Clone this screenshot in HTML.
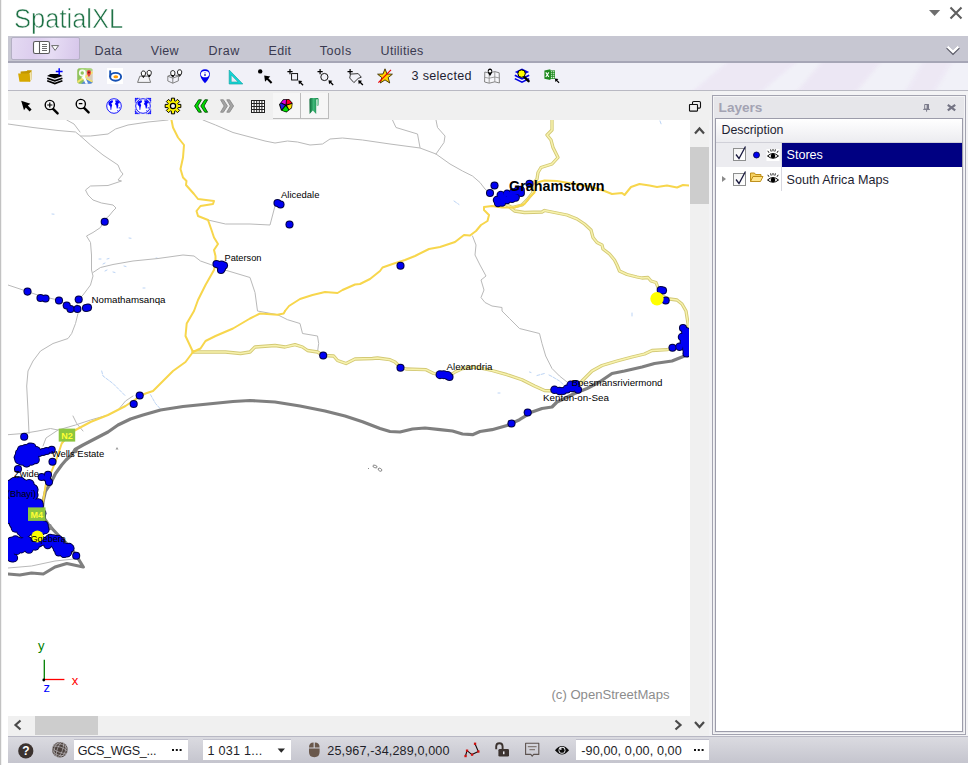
<!DOCTYPE html>
<html><head><meta charset="utf-8"><title>SpatialXL</title>
<style>
html,body{margin:0;padding:0;}
body{width:970px;height:765px;overflow:hidden;background:#fff;position:relative;font-family:"Liberation Sans",sans-serif;font-size:12.5px;color:#1e1e32;}
.abs{position:absolute;}
svg text{font-family:"Liberation Sans",sans-serif;}
#edge{left:0;top:0;width:1px;height:765px;background:#c2c2c2;border-right:1px solid #f2f2f2;}
#title{left:14.2px;top:2px;font-size:27.5px;color:#1f7246;letter-spacing:0;line-height:34px;-webkit-text-stroke:0.6px #fff;white-space:nowrap;transform:scaleX(0.928);transform-origin:0 0;}
#menubar{left:8px;top:36px;width:960px;height:25px;background:#c7c7d2;border-bottom:2px solid #a6a6b6;}
#mbtn{left:11px;top:37px;width:67px;height:21px;border:1px solid #b4b0c4;border-radius:2px;background:linear-gradient(100deg,#e4daf2 0%,#dccdee 35%,#e6dcf4 60%,#d6c6ea 100%);}
.mi{top:43.6px;font-size:12.5px;color:#3a3a50;line-height:14px;white-space:nowrap;}
#tb1{left:8px;top:63px;width:960px;height:27px;background:#f1f1f8;border-bottom:1px solid #b9b9c3;overflow:hidden;}
#tb2{left:8px;top:91px;width:705px;height:29px;background:#f0f0f0;}
#rightbg{left:709px;top:91px;width:259px;height:645px;background:#f3f3f5;}
.ic{position:absolute;overflow:visible;}
#vs{left:690px;top:120px;width:19px;height:616px;background:#f0f0f0;}
#vthumb{left:690px;top:147px;width:19px;height:57px;background:#cdcdcd;}
#hs{left:8px;top:716px;width:682px;height:20px;background:#f0f0f0;}
#hthumb{left:35px;top:716px;width:63px;height:19px;background:#cdcdcd;}
#lp{left:712px;top:95px;width:252px;height:638px;border:1px solid #a3a3b0;background:#e6e6ea;box-shadow:inset 0 0 0 1px #f4f4f6;}
#lpin{left:715px;top:118px;width:246px;height:612px;border:1px solid #9c9caa;background:#fff;}
#lptitle{left:718.6px;top:100px;font-size:13.6px;font-weight:bold;color:#a3a3b3;line-height:15px;}
#lphead{left:716px;top:119px;width:246px;height:23px;background:linear-gradient(#ffffff,#ececf0);border-bottom:1px solid #d0d0d8;}
#lphead span{position:absolute;left:5.5px;top:4px;font-size:12.4px;color:#1e1e32;line-height:14px;}
#row1l{left:716px;top:143px;width:66px;height:24px;background:#ececf0;}
#row1{left:782px;top:143px;width:180px;height:24px;background:#000082;}
.rowt{font-size:12.6px;line-height:14px;white-space:nowrap;}
.cb{width:11px;height:11px;border:1px solid #8e8f8f;background:linear-gradient(135deg,#f4f4f4,#fff);}
#status{left:8px;top:736px;width:960px;height:26.6px;background:linear-gradient(#b8b8c4 0,#b8b8c4 1px,#dadae0 1.5px,#c5c5ce 100%);}
.tbx{background:#fff;height:21px;top:739px;box-shadow:inset 0 1px 0 #c0c0cc;}
.st{top:744px;font-size:12.6px;line-height:14px;color:#1e1e28;white-space:nowrap;}
</style></head>
<body>
<div class="abs" id="edge"></div>
<div class="abs" id="title">SpatialXL</div>
<svg class="abs" style="left:926px;top:4px" width="40" height="18" viewBox="0 0 40 18"><path d="M3 6 L14.2 6 L8.6 12 Z" fill="#6e6e6e"/><path d="M24.5 3.5 L35.5 14.5 M35.5 3.5 L24.5 14.5" stroke="#5e5e5e" stroke-width="2.1" fill="none"/></svg>
<div class="abs" id="menubar"></div>
<div class="abs" id="mbtn"></div>
<svg class="abs" style="left:30px;top:40px" width="32" height="16" viewBox="0 0 32 16"><rect x="3.5" y="1.5" width="16" height="12" rx="1.8" fill="#fff" stroke="#5a5a5a" stroke-width="1.1"/><line x1="9.5" y1="1.5" x2="9.5" y2="13.5" stroke="#5a5a5a" stroke-width="1.1"/><path d="M12 4.5h5M12 6.5h5M12 8.5h5M12 10.5h5" stroke="#5a5a5a" stroke-width=".9"/><path d="M21.6 5.6 L28.6 5.6 L25.1 10.4 Z" fill="#fff" stroke="#6a6a6a" stroke-width="1"/></svg>
<div class="abs mi" style="left:94.6px;letter-spacing:.3px">Data</div>
<div class="abs mi" style="left:150.8px;letter-spacing:.3px">View</div>
<div class="abs mi" style="left:208.6px;letter-spacing:.5px">Draw</div>
<div class="abs mi" style="left:268.6px;letter-spacing:.3px">Edit</div>
<div class="abs mi" style="left:319.8px;letter-spacing:.55px">Tools</div>
<div class="abs mi" style="left:380.6px;letter-spacing:.3px">Utilities</div>
<svg class="abs" style="left:945px;top:44px" width="16" height="12" viewBox="0 0 16 12"><path d="M2.4 3.2 L8 8.9 L13.6 3.2" stroke="#5c5c68" stroke-width="3.4" fill="none" stroke-linejoin="miter"/><path d="M2.6 2.6 L8 7.9 L13.4 2.6" stroke="#fff" stroke-width="2.4" fill="none"/></svg>
<div class="abs" id="tb1">
<div class="abs" style="left:700px;top:-30px;width:70px;height:90px;background:#ebe3f3;transform:skewX(-50deg);opacity:.6;filter:blur(2px)"></div>
<div class="abs" style="left:800px;top:-30px;width:60px;height:90px;background:#eae1f2;transform:skewX(-40deg);opacity:.6;filter:blur(2px)"></div>
<div class="abs" style="left:905px;top:-30px;width:30px;height:90px;background:#ebe3f3;transform:skewX(-30deg);opacity:.6;filter:blur(2px)"></div>
</div>
<div class="abs" id="rightbg"></div>
<div class="abs" id="tb2"></div>
<svg class="ic" style="left:17.0px;top:68.0px" width="16" height="16" viewBox="0 0 16 16"><path d="M3.6 5.6 L3.6 3.5 L9.8 3.1 L10.4 2.2 L14.7 2.2 L14.3 11.7 L13 13.7 Z" fill="#c29600"/><path d="M12.4 5.6 L14.6 3 L14.2 11.4 L13.1 13.6 Z" fill="#f1e4ae"/><path d="M1.1 5.5 L12.4 5.5 L13.1 13.8 L2.5 13.8 Z" fill="#d6a800"/></svg>
<svg class="ic" style="left:47.4px;top:68.0px" width="16" height="16" viewBox="0 0 16 16"><path d="M0.1 7.9 L3.4 5.9 L12.2 5.9 L15.5 7.9 L7.8 10.6 Z" fill="#000"/><path d="M0.2 10.2 L7.8 12.9 L15.4 10.2" fill="none" stroke="#000" stroke-width="1.7"/><path d="M0.2 12.8 L7.8 15.5 L15.4 12.8" fill="none" stroke="#000" stroke-width="1.7"/><path d="M12.2 0.2 V7 M8.8 3.6 H15.6" stroke="#0000ff" stroke-width="1.5"/></svg>
<svg class="ic" style="left:76.6px;top:68.0px" width="16" height="16" viewBox="0 0 16 16"><defs><clipPath id="gm"><rect x="0.3" y="0.3" width="15.4" height="15.4" rx="2.6"/></clipPath></defs><g clip-path="url(#gm)"><rect width="16" height="16" fill="#d8cdb8"/><path d="M0 0 H9.5 L6 16 H0 Z" fill="#8fc45c"/><path d="M0 0 H16 V2.5 L9 4 Z" fill="#a8d67c"/><path d="M4 16 L10 10.5 L16 13.5 V16 Z" fill="#4f86d9"/><path d="M0 14.5 L9.5 8 L16 4" stroke="#f6e36a" stroke-width="2" fill="none"/><path d="M6.2 8 L10 16" stroke="#fff" stroke-width="2.4" fill="none"/><path d="M9.5 10.5 L16 14" stroke="#f6e36a" stroke-width="1.6" fill="none"/><circle cx="5.3" cy="5" r="2.6" fill="none" stroke="#fff" stroke-width="1.7" opacity=".9"/><path d="M7.6 2.4 L7.6 7.6 Q7.4 10 4.6 9.6" stroke="#fff" stroke-width="1.5" fill="none" opacity=".9"/><path d="M11.9 9 C9 5.4 9.4 2 11.9 2 C14.4 2 14.8 5.4 11.9 9 Z" fill="#e8453c"/><circle cx="11.9" cy="4.5" r="1" fill="#7a1a14"/></g></svg>
<svg class="ic" style="left:107.0px;top:68.0px" width="16" height="16" viewBox="0 0 16 16"><rect width="16" height="16" fill="#fff"/><path d="M3.2 2.4 V9.2" stroke="#1550b4" stroke-width="1.9" fill="none"/><ellipse cx="8.6" cy="8.8" rx="5.5" ry="3.9" fill="none" stroke="#1550b4" stroke-width="1.9"/><ellipse cx="8.8" cy="8.8" rx="2.4" ry="1.5" fill="#ff9a00"/></svg>
<svg class="ic" style="left:137.0px;top:68.0px" width="16" height="16" viewBox="0 0 16 16"><path d="M2.8 8.2 H11.6 L13.6 14.4 H0.6 Z" fill="#f4f4f8" stroke="#777" stroke-width="1"/><g transform="translate(6.4,9.6)"><path d="M0 0 C-3 -3.2 -2.6 -6.6 0 -6.6 C2.6 -6.6 3 -3.2 0 0 Z" fill="#fff" stroke="#000" stroke-width=".9"/><path d="M-1.4 -2.2 L1.4 -2.2 L0 -0.3 Z" fill="#000"/></g><g transform="translate(12.2,9)"><path d="M0 0 C-3 -3.2 -2.6 -6.6 0 -6.6 C2.6 -6.6 3 -3.2 0 0 Z" fill="#fff" stroke="#000" stroke-width=".9"/><path d="M-1.4 -2.2 L1.4 -2.2 L0 -0.3 Z" fill="#000"/></g></svg>
<svg class="ic" style="left:167.0px;top:68.0px" width="16" height="16" viewBox="0 0 16 16"><path d="M0.8 8.2 L5.6 6.2 L11.4 8 L11.4 12.8 L5.8 15.2 L0.8 13 Z M0.8 8.2 L5.8 10.2 L11.4 8 M5.8 10.2 V15.2" fill="none" stroke="#777" stroke-width=".9"/><g transform="translate(5.8,9.2)"><path d="M0 0 C-3 -3.2 -2.6 -6.6 0 -6.6 C2.6 -6.6 3 -3.2 0 0 Z" fill="#fff" stroke="#000" stroke-width=".9"/><path d="M-1.4 -2.2 L1.4 -2.2 L0 -0.3 Z" fill="#000"/></g><g transform="translate(12.6,8.4)"><path d="M0 0 C-3 -3.2 -2.6 -6.6 0 -6.6 C2.6 -6.6 3 -3.2 0 0 Z" fill="#fff" stroke="#000" stroke-width=".9"/><path d="M-1.4 -2.2 L1.4 -2.2 L0 -0.3 Z" fill="#000"/></g></svg>
<svg class="ic" style="left:197.0px;top:68.0px" width="16" height="16" viewBox="0 0 16 16"><path d="M8 15.2 C1.2 8.6 1.8 1.2 8 1.2 C14.2 1.2 14.8 8.6 8 15.2 Z" fill="#0000f0"/><ellipse cx="8" cy="6.2" rx="4.1" ry="3.1" fill="#fff"/><path d="M8 4.4 V5.2 M8 6 V8" stroke="#0000c0" stroke-width="1.2"/></svg>
<svg class="ic" style="left:227.5px;top:68.5px" width="16" height="16" viewBox="0 0 16 16"><path d="M1.2 1 V15 H14.8 Z" fill="#12d6d6" stroke="#18a4a4" stroke-width=".7"/><path d="M3.2 5.9 V13 H10.1 Z" fill="#ececf4" stroke="#18a4a4" stroke-width=".6"/></svg>
<svg class="ic" style="left:257.0px;top:68.0px" width="16" height="16" viewBox="0 0 16 16"><circle cx="3.2" cy="3.4" r="2.2" fill="#000"/><g transform="translate(7.2,7.6) scale(1.45)"><path d="M0 0 L4.2 0.6 L2.9 1.9 L5.6 4.6 L4.6 5.6 L1.9 2.9 L0.6 4.2 Z" fill="#000"/></g></svg>
<svg class="ic" style="left:288.0px;top:68.5px" width="16" height="16" viewBox="0 0 16 16"><path d="M2 0 V5.2 M-0.6 2.6 H4.6" stroke="#000" stroke-width="1.2"/><rect x="3.6" y="4.6" width="6" height="6.4" fill="none" stroke="#000" stroke-width=".9"/><g transform="translate(10.4,11.5) scale(0.92)"><path d="M0 0 L4.2 0.6 L2.9 1.9 L5.6 4.6 L4.6 5.6 L1.9 2.9 L0.6 4.2 Z" fill="#000"/></g></svg>
<svg class="ic" style="left:318.0px;top:68.5px" width="16" height="16" viewBox="0 0 16 16"><path d="M2.1 0 V5.2 M-0.5 2.6 H4.7" stroke="#000" stroke-width="1.2"/><circle cx="6.4" cy="8" r="3.6" fill="none" stroke="#000" stroke-width=".9"/><g transform="translate(10.5,11.3) scale(0.92)"><path d="M0 0 L4.2 0.6 L2.9 1.9 L5.6 4.6 L4.6 5.6 L1.9 2.9 L0.6 4.2 Z" fill="#000"/></g></svg>
<svg class="ic" style="left:348.0px;top:68.5px" width="16" height="16" viewBox="0 0 16 16"><path d="M2.1 0 V5.2 M-0.5 2.6 H4.7" stroke="#000" stroke-width="1.2"/><path d="M2.5 5.1 L10.2 4.6 L13.3 8.2 L10.2 9.4 L5.9 13.6 L1.7 9 Z" fill="none" stroke="#222" stroke-width=".9"/><g transform="translate(10.2,11.3) scale(0.92)"><path d="M0 0 L4.2 0.6 L2.9 1.9 L5.6 4.6 L4.6 5.6 L1.9 2.9 L0.6 4.2 Z" fill="#000"/></g></svg>
<svg class="ic" style="left:377.0px;top:68.0px" width="16" height="16" viewBox="0 0 16 16"><path d="M8 0.8 L10 6 L15.4 6.2 L11.2 9.6 L12.7 15 L8 11.9 L3.3 15 L4.8 9.6 L0.6 6.2 L6 6 Z" fill="#ffd400" stroke="#3a2c00" stroke-width=".9" stroke-linejoin="round"/><path d="M1.4 14.6 L14 1.8" stroke="#ee0000" stroke-width="1.2"/></svg>
<svg class="ic" style="left:484.0px;top:68.0px" width="16" height="16" viewBox="0 0 16 16"><path d="M0.8 4 L5 5 L10.8 3.6 L15.2 4.8 L15.4 15 L10.8 13.8 L5.2 15.2 L0.6 14 Z" fill="#f6f6fa" stroke="#777" stroke-width=".9"/><path d="M5.2 5 V15 M10.8 3.8 V13.8 M0.8 9.4 L5.2 10.2 L10.8 9 L15.4 10" fill="none" stroke="#888" stroke-width=".8"/><path d="M6 8 C2.8 4.4 3.2 0.6 6 0.6 C8.8 0.6 9.2 4.4 6 8 Z" fill="#000"/><circle cx="6" cy="3.2" r="1.3" fill="#fff"/></svg>
<svg class="ic" style="left:513.6px;top:67.8px" width="16" height="16" viewBox="0 0 16 16"><path d="M8 0.4 L15.2 4 L8 7.6 L0.8 4 Z" fill="#0000e0"/><path d="M0.8 7.2 L8 10.8 L15.2 7.2" fill="none" stroke="#0000e0" stroke-width="1.6"/><path d="M0.8 10.6 L8 14.2 L15.2 10.6" fill="none" stroke="#0000e0" stroke-width="1.6"/><path d="M10.4 9.2 L14.6 13.2" stroke="#000" stroke-width="2.4" stroke-linecap="round"/><circle cx="7.6" cy="5.6" r="3.7" fill="#ffff00" stroke="#000" stroke-width="1"/></svg>
<svg class="ic" style="left:544.3px;top:68.0px" width="16" height="16" viewBox="0 0 16 16"><path d="M0.4 2.4 L6.4 1.2 V12 L0.4 10.8 Z" fill="#1e8a1e"/><rect x="6" y="2.4" width="5" height="8.6" fill="#1e8a1e"/><path d="M6.9 3.8 h1.4 M9 3.8 h1.4 M6.9 5.8 h1.4 M9 5.8 h1.4 M6.9 7.8 h1.4 M9 7.8 h1.4 M6.9 9.6 h1.4 M9 9.6 h1.4" stroke="#d8f0d8" stroke-width="1.1"/><path d="M1.8 4.4 L4.8 9 M4.8 4.4 L1.8 9" stroke="#fff" stroke-width="1.1"/><g transform="translate(10.9,10.6) scale(0.82)"><path d="M0 0 L4.2 0.6 L2.9 1.9 L5.6 4.6 L4.6 5.6 L1.9 2.9 L0.6 4.2 Z" fill="#000"/></g></svg>
<div class="abs" style="left:411.6px;top:69px;font-size:12.6px;letter-spacing:.27px;line-height:14px;color:#1e1e32;white-space:nowrap">3 selected</div>
<svg class="ic" style="left:18.0px;top:98.0px" width="16" height="16" viewBox="0 0 16 16"><path d="M3.2 2.8 L12.4 5.8 L9.8 7.6 L13.6 11.4 L11.6 13.4 L7.8 9.6 L6 12.2 Z" fill="#000"/></svg>
<svg class="ic" style="left:43.6px;top:99.4px" width="16" height="16" viewBox="0 0 16 16"><path d="M8.6 9.4 L13.6 14.4" stroke="#000" stroke-width="2.4" stroke-linecap="round"/><circle cx="5.8" cy="6" r="4.6" fill="#f6f6f6" stroke="#000" stroke-width="1.4"/><path d="M3.2 6 H8.4 M5.8 3.4 V8.6" stroke="#000" stroke-width="1.2"/></svg>
<svg class="ic" style="left:74.6px;top:98.2px" width="16" height="16" viewBox="0 0 16 16"><path d="M8.6 9.4 L13.6 14.4" stroke="#000" stroke-width="2.4" stroke-linecap="round"/><circle cx="5.8" cy="6" r="4.6" fill="#f6f6f6" stroke="#000" stroke-width="1.4"/><path d="M3.8 5.6 H7.4" stroke="#000" stroke-width="1.3"/></svg>
<svg class="ic" style="left:106.1px;top:97.9px" width="16" height="16" viewBox="0 0 16 16"><circle cx="8" cy="8" r="7.3" fill="#fafaff" stroke="#1a1aff" stroke-width="1"/><path d="M3.2 3.6 L5.8 2.2 L7.2 2.8 L6.6 4.6 L5.2 5.4 L6.2 7 L5.6 9.2 L5.2 12 L4.6 12 L4.2 8.6 L2.6 6.4 L2.4 4.6 Z" fill="#0000ff"/><path d="M9 2.6 L11.8 2.2 L13.8 4.2 L13.4 5.6 L12 5.4 L12.4 7.4 L11.6 10.4 L10.8 10.4 L10.2 7.2 L8.8 6 L9.8 4.6 Z" fill="#0000ff"/><path d="M12.6 9.6 l1 -.6 l.2 1.2 l-.9 .6 z M11.2 12.4 l1 -.3 l.1 .9 l-.9 .3z" fill="#0000ff"/></svg>
<svg class="ic" style="left:135.0px;top:97.9px" width="16" height="16" viewBox="0 0 16 16"><circle cx="8" cy="8" r="7.3" fill="#fafaff" stroke="#1a1aff" stroke-width="1"/><path d="M3.2 3.6 L5.8 2.2 L7.2 2.8 L6.6 4.6 L5.2 5.4 L6.2 7 L5.6 9.2 L5.2 12 L4.6 12 L4.2 8.6 L2.6 6.4 L2.4 4.6 Z" fill="#0000ff"/><path d="M9 2.6 L11.8 2.2 L13.8 4.2 L13.4 5.6 L12 5.4 L12.4 7.4 L11.6 10.4 L10.8 10.4 L10.2 7.2 L8.8 6 L9.8 4.6 Z" fill="#0000ff"/><path d="M12.6 9.6 l1 -.6 l.2 1.2 l-.9 .6 z M11.2 12.4 l1 -.3 l.1 .9 l-.9 .3z" fill="#0000ff"/><path d="M0 0 H4 L0 4 Z M16 0 V4 L12 0 Z M16 16 H12 L16 12 Z M0 16 V12 L4 16 Z" fill="#2a2aff" opacity=".85"/><path d="M0.3 4.6 V0.3 H4.6 M11.4 0.3 H15.7 V4.6 M15.7 11.4 V15.7 H11.4 M4.6 15.7 H0.3 V11.4" fill="none" stroke="#0000ff" stroke-width=".9" stroke-dasharray="1.2 .7"/></svg>
<svg class="ic" style="left:165.0px;top:97.9px" width="16" height="16" viewBox="0 0 16 16"><path d="M15.84 6.41 L15.84 9.59 L13.16 9.60 L12.78 10.52 L14.67 12.42 L12.42 14.67 L10.52 12.78 L9.60 13.16 L9.59 15.84 L6.41 15.84 L6.40 13.16 L5.48 12.78 L3.58 14.67 L1.33 12.42 L3.22 10.52 L2.84 9.60 L0.16 9.59 L0.16 6.41 L2.84 6.40 L3.22 5.48 L1.33 3.58 L3.58 1.33 L5.48 3.22 L6.40 2.84 L6.41 0.16 L9.59 0.16 L9.60 2.84 L10.52 3.22 L12.42 1.33 L14.67 3.58 L12.78 5.48 L13.16 6.40 Z" fill="#f8f000" stroke="#000" stroke-width="1" stroke-linejoin="round"/><circle cx="8" cy="8" r="2.6" fill="#f4f4f4" stroke="#000" stroke-width="1.2"/></svg>
<svg class="ic" style="left:194.2px;top:98.6px" width="16" height="14" viewBox="0 0 16 14"><path d="M4.6 0.8 L7.4 0.8 L3.8 7 L7.4 13.2 L4.6 13.2 L0.6 7 Z" fill="#00e000" stroke="#064806" stroke-width=".9" stroke-linejoin="round"/><path d="M10.8 0.8 L13.600000000000001 0.8 L10.0 7 L13.600000000000001 13.2 L10.8 13.2 L6.8 7 Z" fill="#00e000" stroke="#064806" stroke-width=".9" stroke-linejoin="round"/></svg>
<svg class="ic" style="left:220.4px;top:98.6px" width="16" height="14" viewBox="0 0 16 14"><path d="M0.6 0.8 L3.4 0.8 L7.4 7 L3.4 13.2 L0.6 13.2 L4.2 7 Z" fill="#a4a4a4" stroke="#8a8a8a" stroke-width=".9" stroke-linejoin="round"/><path d="M6.8 0.8 L9.6 0.8 L13.600000000000001 7 L9.6 13.2 L6.8 13.2 L10.4 7 Z" fill="#a4a4a4" stroke="#8a8a8a" stroke-width=".9" stroke-linejoin="round"/></svg>
<svg class="ic" style="left:250.60000000000002px;top:100.1px" width="14" height="13" viewBox="0 0 14 13"><rect x="0.5" y="0.5" width="13" height="12" fill="#fff" stroke="#222" stroke-width="1"/><line x1="3.1" y1="0.5" x2="3.1" y2="12.5" stroke="#222" stroke-width="1"/><line x1="5.7" y1="0.5" x2="5.7" y2="12.5" stroke="#222" stroke-width="1"/><line x1="8.3" y1="0.5" x2="8.3" y2="12.5" stroke="#222" stroke-width="1"/><line x1="10.9" y1="0.5" x2="10.9" y2="12.5" stroke="#222" stroke-width="1"/><line x1="0.5" y1="3.5" x2="13.5" y2="3.5" stroke="#222" stroke-width="1"/><line x1="0.5" y1="6.5" x2="13.5" y2="6.5" stroke="#222" stroke-width="1"/><line x1="0.5" y1="9.5" x2="13.5" y2="9.5" stroke="#222" stroke-width="1"/></svg><div class="abs" style="left:273px;top:93px;width:27px;height:25px;background:#f6f6f6;border-right:1px solid #bcbcbc;border-bottom:1px solid #bcbcbc;"></div><div class="abs" style="left:301px;top:93px;width:27px;height:25px;background:#f6f6f6;border-right:1px solid #bcbcbc;border-bottom:1px solid #bcbcbc;"></div><svg class="ic" style="left:278.2px;top:98.0px" width="16" height="16" viewBox="0 0 16 16"><path d="M5.2 1.2 L11 1 L14.6 5 L14 10 L8.4 14.6 L3 12.6 L1 6.6 Z" fill="#000"/><path d="M5.6 2 L8 1.8 L7.6 6.6 L3.2 4.6 Z" fill="#e000e0"/><path d="M8.8 1.8 L11 1.8 L13.8 5 L8.6 6.6 Z" fill="#ff0020"/><path d="M2 6 L2.8 5.2 L7 7.4 L3.6 11.6 Z" fill="#2020e0"/><path d="M9 7.6 L13.8 6 L13.4 9.6 L11.2 11.4 Z" fill="#ffe000"/><path d="M7.8 8 L10.6 12 L8.2 13.8 L4.2 12.2 Z" fill="#00e000"/></svg><svg class="ic" style="left:305.5px;top:97.5px" width="16" height="17" viewBox="0 0 16 17"><defs><linearGradient id="bk" x1="0" x2="1"><stop offset="0" stop-color="#0a6a36"/><stop offset=".45" stop-color="#3fb878"/><stop offset="1" stop-color="#0e7a40"/></linearGradient></defs><path d="M3.4 1.2 Q3.6 0 5.4 0 H11.6 Q12.8 0.2 12.6 1.8 L12.4 7.6 L10.8 7.4 L11 1.6 L10.2 1.4 L10.2 16 L6.8 12.6 L3.6 16 Z" fill="url(#bk)"/><path d="M10.6 1.4 Q11.8 0.6 12.4 1.8 L12.2 7.6 L10.8 7.4 Z" fill="#8fd8ae"/></svg><svg class="abs" style="left:688px;top:100px" width="14" height="13" viewBox="0 0 14 13"><rect x="4.5" y="1.5" width="8" height="6.6" rx="1.2" fill="none" stroke="#111" stroke-width="1.1"/><rect x="1.5" y="4.5" width="8" height="6.6" rx=".5" fill="#f0f0f0" stroke="#111" stroke-width="1.1"/></svg>
<svg id="map" width="681" height="596" viewBox="0 0 681 596" style="position:absolute;left:8px;top:120px;background:#fff">
<polyline points="93.7,251.0 95.0,256.0 105.0,263.5 112.5,271.0 117.5,276.0" fill="none" stroke="#bcd4f5" stroke-width="1" stroke-linejoin="round" stroke-linecap="round" stroke-dasharray="3 1.5"/>
<polyline points="142.5,274.7 147.5,283.5 152.5,289.0" fill="none" stroke="#bcd4f5" stroke-width="1" stroke-linejoin="round" stroke-linecap="round" stroke-dasharray="3 1.5"/>
<polyline points="521.5,252.0 523.0,252.5" fill="none" stroke="#bcd4f5" stroke-width="1" stroke-linejoin="round" stroke-linecap="round" stroke-dasharray="3 1.5"/>
<polyline points="529.0,255.5 536.5,253.5" fill="none" stroke="#bcd4f5" stroke-width="1" stroke-linejoin="round" stroke-linecap="round" stroke-dasharray="3 1.5"/>
<polyline points="541.0,255.0 544.0,256.5 551.5,261.0 557.0,266.0" fill="none" stroke="#bcd4f5" stroke-width="1" stroke-linejoin="round" stroke-linecap="round" stroke-dasharray="3 1.5"/>
<polyline points="446.0,81.0 451.0,84.5" fill="none" stroke="#bcd4f5" stroke-width="1" stroke-linejoin="round" stroke-linecap="round" stroke-dasharray="3 1.5"/>
<polyline points="652.0,1.0 653.5,5.0" fill="none" stroke="#bcd4f5" stroke-width="1" stroke-linejoin="round" stroke-linecap="round" stroke-dasharray="3 1.5"/>
<polyline points="624.0,193.0 624.0,196.0" fill="none" stroke="#bcd4f5" stroke-width="1" stroke-linejoin="round" stroke-linecap="round" stroke-dasharray="3 1.5"/>
<polyline points="490.0,273.0 492.0,273.0" fill="none" stroke="#bcd4f5" stroke-width="1" stroke-linejoin="round" stroke-linecap="round" stroke-dasharray="3 1.5"/>
<polyline points="44.0,94.0 46.0,94.2" fill="none" stroke="#bcd4f5" stroke-width="1" stroke-linejoin="round" stroke-linecap="round" stroke-dasharray="3 1.5"/>
<polyline points="91.0,139.0 93.0,139.0" fill="none" stroke="#bcd4f5" stroke-width="1" stroke-linejoin="round" stroke-linecap="round" stroke-dasharray="3 1.5"/>
<polyline points="95.0,144.0 97.0,143.0" fill="none" stroke="#bcd4f5" stroke-width="1" stroke-linejoin="round" stroke-linecap="round" stroke-dasharray="3 1.5"/>
<polyline points="99.0,139.0 101.0,138.5" fill="none" stroke="#bcd4f5" stroke-width="1" stroke-linejoin="round" stroke-linecap="round" stroke-dasharray="3 1.5"/>
<polyline points="121.0,118.0 123.0,118.3" fill="none" stroke="#bcd4f5" stroke-width="1" stroke-linejoin="round" stroke-linecap="round" stroke-dasharray="3 1.5"/>
<polyline points="97.0,151.0 99.0,150.0" fill="none" stroke="#bcd4f5" stroke-width="1" stroke-linejoin="round" stroke-linecap="round" stroke-dasharray="3 1.5"/>
<polyline points="105.0,152.0 107.0,152.5" fill="none" stroke="#bcd4f5" stroke-width="1" stroke-linejoin="round" stroke-linecap="round" stroke-dasharray="3 1.5"/>
<polyline points="116.0,146.0 118.0,146.5" fill="none" stroke="#bcd4f5" stroke-width="1" stroke-linejoin="round" stroke-linecap="round" stroke-dasharray="3 1.5"/>
<polyline points="135.0,168.0 137.0,168.0" fill="none" stroke="#bcd4f5" stroke-width="1" stroke-linejoin="round" stroke-linecap="round" stroke-dasharray="3 1.5"/>
<polyline points="148.0,138.0 149.0,138.0" fill="none" stroke="#bcd4f5" stroke-width="1" stroke-linejoin="round" stroke-linecap="round" stroke-dasharray="3 1.5"/>
<polyline points="0.0,4.0 25.0,7.5 50.0,10.5 67.5,12.0 72.5,16.0 82.5,16.0 100.0,14.0 107.5,9.0 120.0,5.0 140.0,2.0 160.0,0.0" fill="none" stroke="#b9b9b9" stroke-width="1" stroke-linejoin="round" stroke-linecap="round" />
<polyline points="58.7,0.0 66.0,4.0 72.0,12.0" fill="none" stroke="#b9b9b9" stroke-width="1" stroke-linejoin="round" stroke-linecap="round" />
<polyline points="72.5,16.0 82.5,25.0 95.0,35.0 110.0,45.0 112.5,51.0 115.0,54.0 110.0,60.0 113.5,61.0 100.0,65.5 82.5,66.0 77.5,70.0 80.0,75.0 85.0,80.0 93.5,83.0 105.0,85.0 108.0,88.0 105.0,91.0 101.0,96.0 96.0,100.0 92.5,107.5 85.0,112.5 78.5,116.0 82.5,122.5 83.5,135.0 83.5,150.0 85.0,156.0 82.5,165.0 75.0,175.0 70.0,180.0 67.5,191.0 70.0,193.5 67.5,203.5 63.7,213.5 60.0,218.5 45.0,223.5 32.5,231.0 25.0,241.0 20.0,251.0 18.7,266.0 20.0,291.0 21.0,313.5" fill="none" stroke="#b9b9b9" stroke-width="1" stroke-linejoin="round" stroke-linecap="round" />
<polyline points="85.0,152.5 92.5,147.5 105.0,144.5 125.0,141.0 150.0,138.5 175.0,135.0 186.0,136.0 192.5,141.0 202.5,144.5 217.0,150.0 242.0,157.5 247.0,172.5 249.5,191.0 269.5,194.7 279.5,199.7 292.0,203.5 294.5,213.5 309.5,216.0 310.7,223.5 309.5,232.0 315.0,235.5" fill="none" stroke="#b9b9b9" stroke-width="1" stroke-linejoin="round" stroke-linecap="round" />
<polyline points="0.0,165.0 15.0,170.0 32.5,176.0 50.0,180.0 65.0,187.5" fill="none" stroke="#b9b9b9" stroke-width="1" stroke-linejoin="round" stroke-linecap="round" />
<polyline points="200.0,100.0 217.5,104.0 242.0,104.0 262.0,105.0 267.0,86.0" fill="none" stroke="#b9b9b9" stroke-width="1" stroke-linejoin="round" stroke-linecap="round" />
<polyline points="195.0,0.0 207.5,5.0 225.0,12.5 242.0,17.0 257.0,21.0 267.0,23.0 279.5,21.0 289.5,22.0 302.0,25.0 314.5,24.0 322.0,19.0 334.5,18.0 354.5,20.0 382.0,24.0 412.0,28.0 428.0,34.0 442.0,44.0 454.5,51.0 464.5,56.0 472.0,62.5 477.0,69.0 481.0,72.5" fill="none" stroke="#b9b9b9" stroke-width="1" stroke-linejoin="round" stroke-linecap="round" />
<polyline points="384.5,0.0 388.0,7.5 409.5,14.0 412.0,27.5" fill="none" stroke="#b9b9b9" stroke-width="1" stroke-linejoin="round" stroke-linecap="round" />
<polyline points="428.0,0.0 429.5,7.5 437.0,16.0 436.0,22.5 428.0,34.0" fill="none" stroke="#b9b9b9" stroke-width="1" stroke-linejoin="round" stroke-linecap="round" />
<polyline points="464.5,116.0 468.0,125.0 467.0,135.0 472.0,145.0 478.0,156.0 473.0,160.0 476.0,170.0 473.0,177.5 477.0,182.5 484.0,186.0 494.0,187.5 494.0,191.0 501.5,198.5 511.5,208.5 531.5,213.5 534.0,223.5 537.7,236.0 544.0,248.5 551.5,256.0 559.0,262.0" fill="none" stroke="#b9b9b9" stroke-width="1" stroke-linejoin="round" stroke-linecap="round" />
<polyline points="0.0,314.7 15.0,313.5 30.0,311.0 42.5,308.5 50.0,310.0 67.5,305.0 82.5,300.0 100.0,295.0 110.0,290.0 117.5,281.0 125.0,276.0" fill="none" stroke="#b9b9b9" stroke-width="1" stroke-linejoin="round" stroke-linecap="round" />
<polyline points="65.0,296.0 68.7,303.5 75.0,311.0" fill="none" stroke="#b9b9b9" stroke-width="1" stroke-linejoin="round" stroke-linecap="round" />
<polyline points="35.0,326.0 38.0,318.0 50.0,310.0" fill="none" stroke="#b9b9b9" stroke-width="1" stroke-linejoin="round" stroke-linecap="round" />
<polyline points="0.0,448.0 23.5,446.0 47.0,441.0 66.0,439.0" fill="none" stroke="#b9b9b9" stroke-width="1" stroke-linejoin="round" stroke-linecap="round" />
<polyline points="681.5,233.5 674.0,237.0 664.0,241.0 646.5,243.5 634.0,247.0 616.5,251.0 604.0,253.5 591.5,262.0 579.0,268.5 566.5,273.5 556.5,278.5 549.0,282.0 544.0,287.0 534.0,288.5 524.0,292.0 511.5,299.7 499.0,305.5 484.0,309.7 472.0,311.5 464.5,314.7 454.5,314.0 444.5,311.0 432.0,309.7 417.0,308.0 404.5,309.0 392.0,312.0 382.0,311.5 372.0,308.5 354.5,301.7 337.0,296.0 317.0,291.0 292.0,286.0 267.0,282.0 242.0,280.5 225.0,281.5 200.0,284.0 175.0,286.5 152.5,290.0 135.0,295.0 122.5,299.0 110.0,305.0 100.0,312.0 87.5,318.5 75.0,325.0 67.0,329.5 63.5,335.0 58.0,340.0 53.7,345.0 47.5,353.5 42.5,363.5 37.5,371.0 35.0,382.0 34.0,395.0 40.0,404.0 43.5,408.0" fill="none" stroke="#7f7f7f" stroke-width="3.2" stroke-linejoin="round" stroke-linecap="round" />
<polyline points="43.5,408.0 52.0,417.0 62.0,427.0 68.0,435.0 75.3,447.0 58.8,443.5 47.0,447.0 35.3,454.0 23.5,453.0 11.8,455.0 0.0,454.0" fill="none" stroke="#7f7f7f" stroke-width="3.2" stroke-linejoin="round" stroke-linecap="round" />
<circle cx="67.5" cy="331" r="2.3" fill="#7f7f7f"/>
<path d="M46 525 l5 -1 l2 5 l-5 2 z" transform="translate(-8,-120)" fill="#8a8a8a"/>
<polyline points="544.0,0.0 544.0,10.0 539.0,15.0 543.0,20.0 545.0,27.5 550.0,37.5 544.0,44.0 533.0,47.5 530.0,52.5 529.0,59.0 524.0,65.0 525.0,72.5 519.0,80.0 514.0,85.0 504.0,87.5 499.0,85.0" fill="none" stroke="#d3c975" stroke-width="3.3" stroke-linejoin="round" stroke-linecap="round" />
<polyline points="499.0,85.0 506.5,91.0 516.5,92.5 534.0,92.0 536.5,90.5 546.5,92.5 559.0,95.0 569.0,99.0 576.5,104.0 583.0,110.0 585.0,117.5 589.0,122.5 594.0,125.0 595.0,129.0 601.5,134.0 606.5,140.0 609.0,145.0 611.5,151.0 619.0,154.5 629.0,157.0 634.0,158.0 640.0,157.5 643.0,161.0 648.0,162.5 650.0,167.5 654.0,176.0 661.5,179.0 669.0,180.0 674.0,184.0 678.0,191.0 680.0,203.5 681.0,215.0" fill="none" stroke="#d3c975" stroke-width="3.3" stroke-linejoin="round" stroke-linecap="round" />
<polyline points="185.0,232.0 200.0,232.0 217.5,232.0 232.5,233.5 242.0,232.0 247.0,227.0 267.0,225.5 277.0,227.0 287.0,224.7 294.5,227.0 299.5,230.5 309.5,232.0 315.0,235.5 325.7,236.0 329.5,240.5 338.0,243.5 347.0,239.0 364.5,238.5 369.5,238.0 382.0,239.7 387.0,242.0 392.0,247.0 398.0,249.0 418.0,249.7 425.7,253.5 432.0,254.7 442.0,255.5 447.0,252.0 454.5,248.5 467.0,247.0 484.0,250.5 499.0,254.7 514.0,259.7 526.5,266.0 536.5,270.5 546.5,271.0 559.0,268.5 569.0,266.0 576.5,258.5 584.0,251.0 594.0,245.5 609.0,241.0 624.0,237.0 636.5,234.0 644.0,230.5 659.0,229.7 664.0,228.0 674.0,226.0" fill="none" stroke="#d3c975" stroke-width="3.3" stroke-linejoin="round" stroke-linecap="round" />
<polyline points="544.0,0.0 544.0,10.0 539.0,15.0 543.0,20.0 545.0,27.5 550.0,37.5 544.0,44.0 533.0,47.5 530.0,52.5 529.0,59.0 524.0,65.0 525.0,72.5 519.0,80.0 514.0,85.0 504.0,87.5 499.0,85.0" fill="none" stroke="#f7f2ae" stroke-width="1.5" stroke-linejoin="round" stroke-linecap="round" />
<polyline points="499.0,85.0 506.5,91.0 516.5,92.5 534.0,92.0 536.5,90.5 546.5,92.5 559.0,95.0 569.0,99.0 576.5,104.0 583.0,110.0 585.0,117.5 589.0,122.5 594.0,125.0 595.0,129.0 601.5,134.0 606.5,140.0 609.0,145.0 611.5,151.0 619.0,154.5 629.0,157.0 634.0,158.0 640.0,157.5 643.0,161.0 648.0,162.5 650.0,167.5 654.0,176.0 661.5,179.0 669.0,180.0 674.0,184.0 678.0,191.0 680.0,203.5 681.0,215.0" fill="none" stroke="#f7f2ae" stroke-width="1.5" stroke-linejoin="round" stroke-linecap="round" />
<polyline points="185.0,232.0 200.0,232.0 217.5,232.0 232.5,233.5 242.0,232.0 247.0,227.0 267.0,225.5 277.0,227.0 287.0,224.7 294.5,227.0 299.5,230.5 309.5,232.0 315.0,235.5 325.7,236.0 329.5,240.5 338.0,243.5 347.0,239.0 364.5,238.5 369.5,238.0 382.0,239.7 387.0,242.0 392.0,247.0 398.0,249.0 418.0,249.7 425.7,253.5 432.0,254.7 442.0,255.5 447.0,252.0 454.5,248.5 467.0,247.0 484.0,250.5 499.0,254.7 514.0,259.7 526.5,266.0 536.5,270.5 546.5,271.0 559.0,268.5 569.0,266.0 576.5,258.5 584.0,251.0 594.0,245.5 609.0,241.0 624.0,237.0 636.5,234.0 644.0,230.5 659.0,229.7 664.0,228.0 674.0,226.0" fill="none" stroke="#f7f2ae" stroke-width="1.5" stroke-linejoin="round" stroke-linecap="round" />
<polyline points="163.5,0.0 165.0,7.5 170.0,17.5 176.0,25.0 175.0,37.5 172.5,49.0 175.0,57.5 178.5,61.0 178.0,65.0 186.0,74.0 190.0,79.0 206.0,81.0 205.0,84.0 192.5,86.0 188.5,91.0 190.0,96.0 200.0,100.0 203.5,110.0 206.0,117.5 210.0,124.0 206.0,130.0 207.5,136.0 207.5,144.0 206.0,150.0 197.5,165.0 190.0,180.0 186.0,191.0 178.7,203.5 177.5,216.0 185.0,232.0" fill="none" stroke="#f7d64c" stroke-width="2" stroke-linejoin="round" stroke-linecap="round" />
<polyline points="277.0,191.0 281.0,186.0 292.0,179.0 304.5,175.0 317.0,172.0 329.5,173.0 334.5,170.0 347.0,164.5 352.0,164.0 362.0,159.0 372.0,151.0 374.5,147.5 384.5,144.0 397.0,140.0 407.0,136.0 421.0,129.0 432.0,127.0 447.0,122.0 456.0,115.0 462.0,115.5 468.0,111.0 473.0,105.0 479.5,101.0 481.0,95.0 476.0,90.0 476.0,87.0 484.0,86.0 494.0,87.5 506.5,87.5 516.5,84.0 521.5,77.5 526.5,72.5 529.0,62.5 536.5,60.5 549.0,61.0 566.5,64.0 584.0,67.0 596.5,71.0 604.0,74.0 614.0,73.0 616.5,75.0 623.0,67.0 631.5,64.0 641.5,65.5 649.0,67.0 659.0,65.5 669.0,67.5 675.0,65.0 681.5,65.5" fill="none" stroke="#f7d64c" stroke-width="2" stroke-linejoin="round" stroke-linecap="round" />
<polyline points="277.0,191.0 275.7,193.5 269.5,194.7 252.0,193.5 242.0,198.5 225.0,208.5 207.5,216.0 197.5,221.0 192.5,228.5 185.0,232.0" fill="none" stroke="#f7d64c" stroke-width="2" stroke-linejoin="round" stroke-linecap="round" />
<polyline points="185.0,232.0 177.5,242.0 165.0,251.0 155.0,261.0 145.0,271.0 137.5,273.5 132.5,276.0 117.5,286.0 100.0,295.0 82.5,302.0 67.5,310.0 59.0,317.0 53.7,323.5 48.7,338.5 43.7,351.0 37.5,366.0 35.0,382.0 34.0,400.0" fill="none" stroke="#f7d64c" stroke-width="2" stroke-linejoin="round" stroke-linecap="round" />
<ellipse cx="367" cy="346.5" rx="2.2" ry="1.2" fill="none" stroke="#444" stroke-width=".6" transform="rotate(20 367 346.5)"/>
<ellipse cx="372" cy="349.7" rx="2" ry="1.3" fill="none" stroke="#444" stroke-width=".6" transform="rotate(30 372 349.7)"/>
<circle cx="360.5" cy="348.5" r=".5" fill="#666"/>
<path d="M107.5 329.5 l3 0 l-1.5 -2.6 z" fill="#999"/>
<g fill="#000046">
<circle cx="96.7" cy="101.7" r="4.05"/>
<circle cx="19.5" cy="171.6" r="4.05"/>
<circle cx="32.5" cy="178.0" r="4.05"/>
<circle cx="37.5" cy="178.5" r="4.05"/>
<circle cx="51.0" cy="180.5" r="4.05"/>
<circle cx="58.7" cy="185.5" r="4.05"/>
<circle cx="70.7" cy="179.5" r="4.05"/>
<circle cx="62.5" cy="189.0" r="4.05"/>
<circle cx="69.4" cy="189.0" r="4.05"/>
<circle cx="80.0" cy="187.5" r="4.05"/>
<circle cx="78.0" cy="188.0" r="4.05"/>
<circle cx="269.5" cy="83.0" r="4.05"/>
<circle cx="272.5" cy="84.5" r="4.05"/>
<circle cx="281.5" cy="104.5" r="4.05"/>
<circle cx="208.5" cy="144.0" r="4.05"/>
<circle cx="211.0" cy="145.0" r="4.05"/>
<circle cx="213.5" cy="144.5" r="4.05"/>
<circle cx="216.0" cy="145.5" r="4.05"/>
<circle cx="214.0" cy="148.5" r="4.05"/>
<circle cx="213.0" cy="150.0" r="4.05"/>
<circle cx="392.5" cy="145.7" r="4.05"/>
<circle cx="486.5" cy="65.5" r="4.05"/>
<circle cx="482.0" cy="73.0" r="4.05"/>
<circle cx="521.5" cy="63.7" r="4.05"/>
<circle cx="492.7" cy="75.0" r="4.15"/>
<circle cx="499.0" cy="73.7" r="4.15"/>
<circle cx="505.0" cy="72.5" r="4.15"/>
<circle cx="509.0" cy="71.0" r="4.15"/>
<circle cx="512.7" cy="70.0" r="4.15"/>
<circle cx="489.0" cy="80.0" r="4.25"/>
<circle cx="494.0" cy="82.5" r="4.25"/>
<circle cx="499.0" cy="80.0" r="4.25"/>
<circle cx="504.0" cy="78.7" r="4.25"/>
<circle cx="507.7" cy="77.5" r="4.15"/>
<circle cx="490.0" cy="83.0" r="4.15"/>
<circle cx="495.0" cy="78.0" r="4.15"/>
<circle cx="502.0" cy="75.5" r="4.15"/>
<circle cx="513.0" cy="73.0" r="3.95"/>
<circle cx="652.7" cy="170.0" r="4.05"/>
<circle cx="655.0" cy="170.5" r="4.05"/>
<circle cx="657.7" cy="180.5" r="4.05"/>
<circle cx="315.2" cy="235.5" r="4.05"/>
<circle cx="392.5" cy="247.7" r="4.05"/>
<circle cx="432.0" cy="254.7" r="4.45"/>
<circle cx="435.7" cy="254.7" r="4.45"/>
<circle cx="439.5" cy="255.5" r="4.45"/>
<circle cx="441.5" cy="257.0" r="4.05"/>
<circle cx="519.7" cy="292.5" r="4.05"/>
<circle cx="503.5" cy="303.5" r="4.05"/>
<circle cx="546.5" cy="269.7" r="4.25"/>
<circle cx="551.5" cy="271.0" r="4.25"/>
<circle cx="555.0" cy="271.0" r="4.05"/>
<circle cx="559.0" cy="269.0" r="4.45"/>
<circle cx="562.7" cy="264.7" r="4.25"/>
<circle cx="564.0" cy="268.0" r="4.25"/>
<circle cx="566.5" cy="267.0" r="4.45"/>
<circle cx="570.0" cy="269.7" r="4.05"/>
<circle cx="568.0" cy="264.0" r="4.05"/>
<circle cx="664.5" cy="227.7" r="4.05"/>
<circle cx="671.5" cy="226.7" r="4.25"/>
<circle cx="675.0" cy="208.0" r="4.05"/>
<circle cx="674.0" cy="217.0" r="4.25"/>
<circle cx="678.5" cy="233.5" r="4.05"/>
<circle cx="678.0" cy="212.0" r="4.95"/>
<circle cx="679.0" cy="218.0" r="5.45"/>
<circle cx="678.0" cy="224.0" r="5.45"/>
<circle cx="679.0" cy="229.0" r="4.95"/>
<circle cx="676.0" cy="222.0" r="4.45"/>
<circle cx="131.7" cy="275.5" r="4.05"/>
<circle cx="125.7" cy="284.0" r="4.05"/>
<circle cx="16.2" cy="316.7" r="4.05"/>
<circle cx="38.7" cy="331.0" r="4.05"/>
<circle cx="43.7" cy="329.7" r="4.05"/>
<circle cx="35.0" cy="332.0" r="4.05"/>
<circle cx="31.0" cy="333.0" r="4.05"/>
<circle cx="44.5" cy="341.7" r="4.05"/>
<circle cx="10.0" cy="349.0" r="4.05"/>
<circle cx="40.0" cy="354.7" r="4.05"/>
<circle cx="33.7" cy="357.0" r="4.05"/>
<circle cx="41.0" cy="362.0" r="4.05"/>
<circle cx="39.0" cy="358.0" r="4.05"/>
<circle cx="68.2" cy="435.8" r="4.05"/>
<circle cx="17.5" cy="328.4" r="4.45"/>
<circle cx="24.0" cy="327.2" r="4.45"/>
<circle cx="21.7" cy="331.9" r="4.45"/>
<circle cx="12.2" cy="334.1" r="4.45"/>
<circle cx="11.7" cy="332.9" r="4.45"/>
<circle cx="19.5" cy="339.2" r="4.45"/>
<circle cx="13.5" cy="329.6" r="4.45"/>
<circle cx="23.5" cy="341.2" r="4.45"/>
<circle cx="22.5" cy="332.3" r="4.45"/>
<circle cx="28.2" cy="330.6" r="4.45"/>
<circle cx="17.2" cy="339.1" r="4.45"/>
<circle cx="14.6" cy="335.3" r="4.45"/>
<circle cx="23.8" cy="332.0" r="4.45"/>
<circle cx="22.0" cy="327.0" r="4.45"/>
<circle cx="24.6" cy="332.8" r="4.45"/>
<circle cx="17.3" cy="335.4" r="4.45"/>
<circle cx="20.1" cy="330.8" r="4.45"/>
<circle cx="26.9" cy="337.2" r="4.45"/>
<circle cx="15.9" cy="335.2" r="4.45"/>
<circle cx="21.5" cy="340.0" r="4.45"/>
<circle cx="25.6" cy="330.6" r="4.45"/>
<circle cx="19.4" cy="338.1" r="4.45"/>
<circle cx="14.0" cy="333.8" r="4.45"/>
<circle cx="11.8" cy="336.7" r="4.45"/>
<circle cx="26.3" cy="335.2" r="4.45"/>
<circle cx="28.5" cy="331.0" r="4.45"/>
<circle cx="24.9" cy="335.5" r="4.45"/>
<circle cx="22.6" cy="333.3" r="4.45"/>
<circle cx="20.5" cy="336.6" r="4.45"/>
<circle cx="12.2" cy="337.2" r="4.45"/>
<circle cx="27.4" cy="330.6" r="4.45"/>
<circle cx="18.7" cy="336.7" r="4.45"/>
<circle cx="11.5" cy="333.4" r="4.45"/>
<circle cx="13.6" cy="330.0" r="4.45"/>
<circle cx="18.8" cy="339.9" r="4.45"/>
<circle cx="12.6" cy="333.2" r="4.45"/>
<circle cx="22.0" cy="340.1" r="4.45"/>
<circle cx="27.4" cy="339.8" r="4.45"/>
<circle cx="16.6" cy="332.6" r="4.45"/>
<circle cx="18.2" cy="340.1" r="4.45"/>
<circle cx="10.1" cy="337.3" r="4.45"/>
<circle cx="10.8" cy="339.8" r="4.45"/>
<circle cx="15.1" cy="337.6" r="4.45"/>
<circle cx="12.4" cy="340.7" r="4.45"/>
<circle cx="19.4" cy="341.9" r="4.45"/>
<circle cx="14.2" cy="341.2" r="4.45"/>
<circle cx="16.1" cy="335.5" r="4.45"/>
<circle cx="18.8" cy="342.8" r="4.45"/>
<circle cx="18.5" cy="343.0" r="4.45"/>
<circle cx="12.7" cy="339.0" r="4.45"/>
<circle cx="-0.9" cy="374.8" r="5.45"/>
<circle cx="2.3" cy="364.9" r="5.45"/>
<circle cx="6.2" cy="362.6" r="5.45"/>
<circle cx="-1.0" cy="369.1" r="5.45"/>
<circle cx="14.4" cy="364.6" r="5.45"/>
<circle cx="3.6" cy="368.8" r="5.45"/>
<circle cx="6.9" cy="364.1" r="5.45"/>
<circle cx="10.0" cy="371.7" r="5.45"/>
<circle cx="6.3" cy="367.1" r="5.45"/>
<circle cx="20.9" cy="364.9" r="5.45"/>
<circle cx="11.8" cy="364.6" r="5.45"/>
<circle cx="12.3" cy="362.1" r="5.45"/>
<circle cx="11.8" cy="382.0" r="5.45"/>
<circle cx="21.9" cy="376.1" r="5.45"/>
<circle cx="3.8" cy="369.2" r="5.45"/>
<circle cx="1.0" cy="377.7" r="5.45"/>
<circle cx="12.0" cy="377.9" r="5.45"/>
<circle cx="5.9" cy="366.2" r="5.45"/>
<circle cx="21.6" cy="378.4" r="5.45"/>
<circle cx="20.5" cy="377.0" r="5.45"/>
<circle cx="2.8" cy="372.4" r="5.45"/>
<circle cx="6.7" cy="362.1" r="5.45"/>
<circle cx="3.8" cy="376.0" r="5.45"/>
<circle cx="24.7" cy="370.9" r="5.45"/>
<circle cx="24.7" cy="369.2" r="5.45"/>
<circle cx="2.6" cy="366.3" r="5.45"/>
<circle cx="1.9" cy="365.8" r="5.45"/>
<circle cx="14.7" cy="380.4" r="5.45"/>
<circle cx="21.2" cy="371.6" r="5.45"/>
<circle cx="15.6" cy="378.3" r="5.45"/>
<circle cx="-1.5" cy="375.4" r="5.45"/>
<circle cx="23.3" cy="377.9" r="5.45"/>
<circle cx="18.5" cy="371.5" r="5.45"/>
<circle cx="1.4" cy="378.1" r="5.45"/>
<circle cx="6.0" cy="378.3" r="5.45"/>
<circle cx="25.1" cy="369.8" r="5.45"/>
<circle cx="8.0" cy="381.4" r="5.45"/>
<circle cx="17.7" cy="365.1" r="5.45"/>
<circle cx="0.4" cy="378.9" r="5.45"/>
<circle cx="6.5" cy="373.0" r="5.45"/>
<circle cx="25.1" cy="375.1" r="5.45"/>
<circle cx="11.8" cy="381.1" r="5.45"/>
<circle cx="9.0" cy="379.8" r="5.45"/>
<circle cx="20.8" cy="365.9" r="5.45"/>
<circle cx="3.6" cy="367.7" r="5.45"/>
<circle cx="3.2" cy="373.8" r="5.45"/>
<circle cx="3.8" cy="370.3" r="5.45"/>
<circle cx="6.6" cy="371.1" r="5.45"/>
<circle cx="13.5" cy="380.5" r="5.45"/>
<circle cx="8.6" cy="380.8" r="5.45"/>
<circle cx="11.0" cy="372.7" r="5.45"/>
<circle cx="11.7" cy="361.9" r="5.45"/>
<circle cx="9.2" cy="365.3" r="5.45"/>
<circle cx="1.2" cy="371.4" r="5.45"/>
<circle cx="17.8" cy="373.2" r="5.45"/>
<circle cx="5.8" cy="372.4" r="5.45"/>
<circle cx="12.7" cy="378.0" r="5.45"/>
<circle cx="-0.8" cy="373.3" r="5.45"/>
<circle cx="3.5" cy="367.3" r="5.45"/>
<circle cx="19.2" cy="372.2" r="5.45"/>
<circle cx="12.9" cy="377.5" r="5.45"/>
<circle cx="23.4" cy="370.8" r="5.45"/>
<circle cx="14.4" cy="372.1" r="5.45"/>
<circle cx="11.4" cy="376.0" r="5.45"/>
<circle cx="9.6" cy="372.7" r="5.45"/>
<circle cx="10.3" cy="381.3" r="5.45"/>
<circle cx="17.0" cy="379.9" r="5.45"/>
<circle cx="12.8" cy="381.3" r="5.45"/>
<circle cx="21.2" cy="364.4" r="5.45"/>
<circle cx="-0.4" cy="370.8" r="5.45"/>
<circle cx="-1.8" cy="366.6" r="5.45"/>
<circle cx="-1.8" cy="375.6" r="5.45"/>
<circle cx="19.5" cy="380.3" r="5.45"/>
<circle cx="0.6" cy="376.5" r="5.45"/>
<circle cx="15.8" cy="364.5" r="5.45"/>
<circle cx="7.9" cy="371.7" r="5.45"/>
<circle cx="0.8" cy="370.6" r="5.45"/>
<circle cx="11.5" cy="368.6" r="5.45"/>
<circle cx="1.9" cy="368.2" r="5.45"/>
<circle cx="12.6" cy="370.7" r="5.45"/>
<circle cx="14.7" cy="372.3" r="5.45"/>
<circle cx="-0.9" cy="367.1" r="5.45"/>
<circle cx="4.1" cy="364.2" r="5.45"/>
<circle cx="8.7" cy="380.6" r="5.45"/>
<circle cx="20.6" cy="366.9" r="5.45"/>
<circle cx="13.1" cy="376.2" r="5.45"/>
<circle cx="16.6" cy="370.4" r="5.45"/>
<circle cx="15.0" cy="378.3" r="5.45"/>
<circle cx="9.6" cy="368.6" r="5.45"/>
<circle cx="12.6" cy="381.0" r="5.45"/>
<circle cx="7.6" cy="381.6" r="5.45"/>
<circle cx="17.0" cy="384.7" r="5.45"/>
<circle cx="9.2" cy="386.5" r="5.45"/>
<circle cx="25.3" cy="386.1" r="5.45"/>
<circle cx="16.0" cy="383.0" r="5.45"/>
<circle cx="24.4" cy="393.4" r="5.45"/>
<circle cx="4.8" cy="391.3" r="5.45"/>
<circle cx="27.5" cy="390.1" r="5.45"/>
<circle cx="15.8" cy="401.4" r="5.45"/>
<circle cx="12.2" cy="392.2" r="5.45"/>
<circle cx="10.3" cy="401.3" r="5.45"/>
<circle cx="23.4" cy="395.8" r="5.45"/>
<circle cx="12.6" cy="387.7" r="5.45"/>
<circle cx="0.5" cy="398.7" r="5.45"/>
<circle cx="7.2" cy="382.6" r="5.45"/>
<circle cx="29.3" cy="396.8" r="5.45"/>
<circle cx="8.1" cy="384.8" r="5.45"/>
<circle cx="8.6" cy="390.9" r="5.45"/>
<circle cx="3.7" cy="390.5" r="5.45"/>
<circle cx="33.0" cy="393.3" r="5.45"/>
<circle cx="9.1" cy="388.0" r="5.45"/>
<circle cx="15.1" cy="392.1" r="5.45"/>
<circle cx="5.2" cy="392.1" r="5.45"/>
<circle cx="1.2" cy="389.2" r="5.45"/>
<circle cx="9.0" cy="384.5" r="5.45"/>
<circle cx="19.1" cy="392.8" r="5.45"/>
<circle cx="25.0" cy="396.4" r="5.45"/>
<circle cx="23.8" cy="402.6" r="5.45"/>
<circle cx="12.0" cy="387.1" r="5.45"/>
<circle cx="24.1" cy="396.0" r="5.45"/>
<circle cx="30.1" cy="395.6" r="5.45"/>
<circle cx="24.4" cy="400.7" r="5.45"/>
<circle cx="3.0" cy="392.7" r="5.45"/>
<circle cx="16.2" cy="401.4" r="5.45"/>
<circle cx="27.0" cy="401.1" r="5.45"/>
<circle cx="19.0" cy="403.0" r="5.45"/>
<circle cx="22.6" cy="397.4" r="5.45"/>
<circle cx="2.8" cy="388.1" r="5.45"/>
<circle cx="18.1" cy="395.6" r="5.45"/>
<circle cx="20.5" cy="397.1" r="5.45"/>
<circle cx="15.6" cy="378.1" r="5.45"/>
<circle cx="26.7" cy="399.0" r="5.45"/>
<circle cx="16.1" cy="393.0" r="5.45"/>
<circle cx="21.7" cy="379.8" r="5.45"/>
<circle cx="24.5" cy="385.1" r="5.45"/>
<circle cx="0.7" cy="385.4" r="5.45"/>
<circle cx="24.3" cy="383.7" r="5.45"/>
<circle cx="15.8" cy="388.7" r="5.45"/>
<circle cx="15.2" cy="397.1" r="5.45"/>
<circle cx="25.6" cy="395.3" r="5.45"/>
<circle cx="21.1" cy="380.2" r="5.45"/>
<circle cx="3.3" cy="385.1" r="5.45"/>
<circle cx="24.8" cy="386.5" r="5.45"/>
<circle cx="18.4" cy="378.3" r="5.45"/>
<circle cx="0.2" cy="385.5" r="5.45"/>
<circle cx="22.2" cy="397.4" r="5.45"/>
<circle cx="22.3" cy="386.1" r="5.45"/>
<circle cx="16.6" cy="391.0" r="5.45"/>
<circle cx="14.8" cy="381.3" r="5.45"/>
<circle cx="30.2" cy="383.6" r="5.45"/>
<circle cx="-1.4" cy="390.9" r="5.45"/>
<circle cx="14.2" cy="385.5" r="5.45"/>
<circle cx="5.6" cy="394.3" r="5.45"/>
<circle cx="3.1" cy="392.7" r="5.45"/>
<circle cx="27.5" cy="392.2" r="5.45"/>
<circle cx="29.9" cy="397.7" r="5.45"/>
<circle cx="6.3" cy="403.1" r="5.45"/>
<circle cx="15.5" cy="378.7" r="5.45"/>
<circle cx="-1.9" cy="391.8" r="5.45"/>
<circle cx="14.2" cy="386.5" r="5.45"/>
<circle cx="3.1" cy="387.6" r="5.45"/>
<circle cx="9.4" cy="401.5" r="5.45"/>
<circle cx="31.4" cy="398.0" r="5.45"/>
<circle cx="30.5" cy="386.1" r="5.45"/>
<circle cx="11.4" cy="389.0" r="5.45"/>
<circle cx="11.0" cy="390.0" r="5.45"/>
<circle cx="8.3" cy="404.2" r="5.45"/>
<circle cx="7.0" cy="385.4" r="5.45"/>
<circle cx="16.4" cy="383.3" r="5.45"/>
<circle cx="11.4" cy="404.8" r="5.45"/>
<circle cx="29.8" cy="400.7" r="5.45"/>
<circle cx="20.7" cy="403.6" r="5.45"/>
<circle cx="31.9" cy="393.4" r="5.45"/>
<circle cx="24.4" cy="390.6" r="5.45"/>
<circle cx="25.1" cy="396.0" r="5.45"/>
<circle cx="8.3" cy="379.4" r="5.45"/>
<circle cx="15.0" cy="387.6" r="5.45"/>
<circle cx="8.7" cy="398.7" r="5.45"/>
<circle cx="21.6" cy="386.4" r="5.45"/>
<circle cx="18.1" cy="389.0" r="5.45"/>
<circle cx="4.0" cy="382.5" r="5.45"/>
<circle cx="15.9" cy="384.2" r="5.45"/>
<circle cx="14.2" cy="381.9" r="5.45"/>
<circle cx="10.3" cy="380.6" r="5.45"/>
<circle cx="6.6" cy="385.2" r="5.45"/>
<circle cx="18.5" cy="402.8" r="5.45"/>
<circle cx="25.0" cy="389.6" r="5.45"/>
<circle cx="12.9" cy="392.7" r="5.45"/>
<circle cx="11.6" cy="387.5" r="5.45"/>
<circle cx="0.2" cy="385.8" r="5.45"/>
<circle cx="16.1" cy="395.6" r="5.45"/>
<circle cx="29.1" cy="384.0" r="5.45"/>
<circle cx="7.8" cy="385.0" r="5.45"/>
<circle cx="12.4" cy="390.5" r="5.45"/>
<circle cx="30.2" cy="391.3" r="5.45"/>
<circle cx="12.1" cy="404.0" r="5.45"/>
<circle cx="27.7" cy="402.0" r="5.45"/>
<circle cx="16.8" cy="397.1" r="5.45"/>
<circle cx="31.9" cy="398.2" r="5.45"/>
<circle cx="21.3" cy="399.4" r="5.45"/>
<circle cx="14.5" cy="393.4" r="5.45"/>
<circle cx="6.4" cy="403.8" r="5.45"/>
<circle cx="21.2" cy="386.5" r="5.45"/>
<circle cx="2.6" cy="385.1" r="5.45"/>
<circle cx="20.9" cy="397.6" r="5.45"/>
<circle cx="16.9" cy="394.3" r="5.45"/>
<circle cx="12.0" cy="384.3" r="5.45"/>
<circle cx="19.6" cy="378.3" r="5.45"/>
<circle cx="8.9" cy="390.9" r="5.45"/>
<circle cx="32.5" cy="396.0" r="5.45"/>
<circle cx="34.3" cy="407.7" r="4.95"/>
<circle cx="13.5" cy="405.0" r="4.95"/>
<circle cx="21.9" cy="410.1" r="4.95"/>
<circle cx="19.4" cy="405.1" r="4.95"/>
<circle cx="27.4" cy="413.1" r="4.95"/>
<circle cx="16.8" cy="407.0" r="4.95"/>
<circle cx="27.8" cy="404.4" r="4.95"/>
<circle cx="31.5" cy="410.9" r="4.95"/>
<circle cx="22.2" cy="404.5" r="4.95"/>
<circle cx="32.2" cy="404.8" r="4.95"/>
<circle cx="13.1" cy="411.1" r="4.95"/>
<circle cx="15.4" cy="413.4" r="4.95"/>
<circle cx="21.9" cy="404.2" r="4.95"/>
<circle cx="13.1" cy="407.0" r="4.95"/>
<circle cx="27.3" cy="413.4" r="4.95"/>
<circle cx="10.7" cy="406.7" r="4.95"/>
<circle cx="7.9" cy="406.7" r="4.95"/>
<circle cx="35.8" cy="406.0" r="4.95"/>
<circle cx="27.3" cy="406.5" r="4.95"/>
<circle cx="18.0" cy="406.0" r="4.95"/>
<circle cx="15.0" cy="406.2" r="4.95"/>
<circle cx="17.4" cy="411.9" r="4.95"/>
<circle cx="32.3" cy="407.2" r="4.95"/>
<circle cx="7.6" cy="407.7" r="4.95"/>
<circle cx="17.9" cy="413.0" r="4.95"/>
<circle cx="12.2" cy="406.4" r="4.95"/>
<circle cx="19.1" cy="411.7" r="4.95"/>
<circle cx="35.4" cy="405.1" r="4.95"/>
<circle cx="29.9" cy="412.8" r="4.95"/>
<circle cx="16.9" cy="405.3" r="4.95"/>
<circle cx="36.6" cy="409.4" r="4.95"/>
<circle cx="14.4" cy="410.6" r="4.95"/>
<circle cx="16.1" cy="405.3" r="4.95"/>
<circle cx="35.3" cy="409.6" r="4.95"/>
<circle cx="13.5" cy="407.7" r="4.95"/>
<circle cx="18.4" cy="405.0" r="4.95"/>
<circle cx="19.8" cy="407.9" r="4.95"/>
<circle cx="31.7" cy="410.9" r="4.95"/>
<circle cx="32.3" cy="411.3" r="4.95"/>
<circle cx="25.4" cy="405.9" r="4.95"/>
<circle cx="8.9" cy="423.3" r="4.65"/>
<circle cx="5.5" cy="428.0" r="4.65"/>
<circle cx="0.9" cy="425.6" r="4.65"/>
<circle cx="7.4" cy="420.0" r="4.65"/>
<circle cx="2.7" cy="425.0" r="4.65"/>
<circle cx="19.9" cy="424.4" r="4.65"/>
<circle cx="6.6" cy="424.0" r="4.65"/>
<circle cx="17.4" cy="427.1" r="4.65"/>
<circle cx="20.9" cy="429.2" r="4.65"/>
<circle cx="18.6" cy="420.5" r="4.65"/>
<circle cx="23.5" cy="422.5" r="4.65"/>
<circle cx="15.9" cy="423.5" r="4.65"/>
<circle cx="20.7" cy="421.4" r="4.65"/>
<circle cx="6.9" cy="421.9" r="4.65"/>
<circle cx="16.2" cy="422.9" r="4.65"/>
<circle cx="14.2" cy="421.8" r="4.65"/>
<circle cx="22.6" cy="426.8" r="4.65"/>
<circle cx="13.3" cy="428.8" r="4.65"/>
<circle cx="3.3" cy="421.3" r="4.65"/>
<circle cx="27.2" cy="426.0" r="4.65"/>
<circle cx="26.0" cy="423.5" r="4.65"/>
<circle cx="24.3" cy="424.4" r="4.65"/>
<circle cx="7.3" cy="428.3" r="4.65"/>
<circle cx="16.7" cy="426.4" r="4.65"/>
<circle cx="6.1" cy="423.4" r="4.65"/>
<circle cx="4.0" cy="421.4" r="4.65"/>
<circle cx="7.1" cy="426.2" r="4.65"/>
<circle cx="18.2" cy="421.4" r="4.65"/>
<circle cx="19.0" cy="421.2" r="4.65"/>
<circle cx="8.7" cy="421.4" r="4.65"/>
<circle cx="22.3" cy="425.6" r="4.65"/>
<circle cx="11.1" cy="425.6" r="4.65"/>
<circle cx="17.9" cy="420.1" r="4.65"/>
<circle cx="4.6" cy="427.3" r="4.65"/>
<circle cx="11.5" cy="422.4" r="4.65"/>
<circle cx="8.6" cy="430.4" r="4.65"/>
<circle cx="8.7" cy="425.8" r="4.65"/>
<circle cx="10.0" cy="424.0" r="4.65"/>
<circle cx="10.2" cy="421.4" r="4.65"/>
<circle cx="20.4" cy="421.4" r="4.65"/>
<circle cx="3.1" cy="436.8" r="4.45"/>
<circle cx="2.9" cy="437.6" r="4.45"/>
<circle cx="3.5" cy="429.0" r="4.45"/>
<circle cx="-1.8" cy="433.6" r="4.45"/>
<circle cx="5.7" cy="437.9" r="4.45"/>
<circle cx="-0.9" cy="434.5" r="4.45"/>
<circle cx="2.5" cy="433.1" r="4.45"/>
<circle cx="-0.2" cy="430.4" r="4.45"/>
<circle cx="4.3" cy="438.1" r="4.45"/>
<circle cx="-0.7" cy="432.9" r="4.45"/>
<circle cx="0.4" cy="428.5" r="4.45"/>
<circle cx="3.8" cy="427.6" r="4.45"/>
<circle cx="52.2" cy="421.1" r="4.45"/>
<circle cx="51.7" cy="423.0" r="4.45"/>
<circle cx="49.8" cy="419.3" r="4.45"/>
<circle cx="48.9" cy="419.8" r="4.45"/>
<circle cx="39.7" cy="424.8" r="4.45"/>
<circle cx="49.9" cy="419.5" r="4.45"/>
<circle cx="35.2" cy="421.2" r="4.45"/>
<circle cx="42.4" cy="421.1" r="4.45"/>
<circle cx="33.0" cy="420.0" r="4.45"/>
<circle cx="47.4" cy="425.2" r="4.45"/>
<circle cx="31.0" cy="422.5" r="4.45"/>
<circle cx="44.4" cy="422.4" r="4.45"/>
<circle cx="45.0" cy="420.4" r="4.45"/>
<circle cx="40.1" cy="422.7" r="4.45"/>
<circle cx="40.2" cy="423.3" r="4.45"/>
<circle cx="40.7" cy="421.5" r="4.45"/>
<circle cx="30.6" cy="423.0" r="4.45"/>
<circle cx="41.7" cy="419.9" r="4.45"/>
<circle cx="48.3" cy="424.2" r="4.45"/>
<circle cx="41.0" cy="419.4" r="4.45"/>
<circle cx="41.4" cy="418.9" r="4.45"/>
<circle cx="33.1" cy="421.4" r="4.45"/>
<circle cx="32.2" cy="421.5" r="4.45"/>
<circle cx="42.2" cy="418.3" r="4.45"/>
<circle cx="45.3" cy="418.7" r="4.45"/>
<circle cx="59.7" cy="432.2" r="4.25"/>
<circle cx="56.2" cy="426.4" r="4.25"/>
<circle cx="56.1" cy="429.0" r="4.25"/>
<circle cx="59.7" cy="432.5" r="4.25"/>
<circle cx="55.9" cy="433.7" r="4.25"/>
<circle cx="49.0" cy="428.8" r="4.25"/>
<circle cx="60.1" cy="427.3" r="4.25"/>
<circle cx="62.3" cy="428.2" r="4.25"/>
<circle cx="61.1" cy="427.1" r="4.25"/>
<circle cx="56.0" cy="433.4" r="4.25"/>
<circle cx="51.3" cy="428.1" r="4.25"/>
<circle cx="56.1" cy="428.6" r="4.25"/>
<circle cx="58.9" cy="433.2" r="4.25"/>
<circle cx="50.7" cy="432.3" r="4.25"/>
</g><g fill="#0000f2">
<circle cx="96.7" cy="101.7" r="3.05"/>
<circle cx="19.5" cy="171.6" r="3.05"/>
<circle cx="32.5" cy="178.0" r="3.05"/>
<circle cx="37.5" cy="178.5" r="3.05"/>
<circle cx="51.0" cy="180.5" r="3.05"/>
<circle cx="58.7" cy="185.5" r="3.05"/>
<circle cx="70.7" cy="179.5" r="3.05"/>
<circle cx="62.5" cy="189.0" r="3.05"/>
<circle cx="69.4" cy="189.0" r="3.05"/>
<circle cx="80.0" cy="187.5" r="3.05"/>
<circle cx="78.0" cy="188.0" r="3.05"/>
<circle cx="269.5" cy="83.0" r="3.05"/>
<circle cx="272.5" cy="84.5" r="3.05"/>
<circle cx="281.5" cy="104.5" r="3.05"/>
<circle cx="208.5" cy="144.0" r="3.05"/>
<circle cx="211.0" cy="145.0" r="3.05"/>
<circle cx="213.5" cy="144.5" r="3.05"/>
<circle cx="216.0" cy="145.5" r="3.05"/>
<circle cx="214.0" cy="148.5" r="3.05"/>
<circle cx="213.0" cy="150.0" r="3.05"/>
<circle cx="392.5" cy="145.7" r="3.05"/>
<circle cx="486.5" cy="65.5" r="3.05"/>
<circle cx="482.0" cy="73.0" r="3.05"/>
<circle cx="521.5" cy="63.7" r="3.05"/>
<circle cx="492.7" cy="75.0" r="3.15"/>
<circle cx="499.0" cy="73.7" r="3.15"/>
<circle cx="505.0" cy="72.5" r="3.15"/>
<circle cx="509.0" cy="71.0" r="3.15"/>
<circle cx="512.7" cy="70.0" r="3.15"/>
<circle cx="489.0" cy="80.0" r="3.25"/>
<circle cx="494.0" cy="82.5" r="3.25"/>
<circle cx="499.0" cy="80.0" r="3.25"/>
<circle cx="504.0" cy="78.7" r="3.25"/>
<circle cx="507.7" cy="77.5" r="3.15"/>
<circle cx="490.0" cy="83.0" r="3.15"/>
<circle cx="495.0" cy="78.0" r="3.15"/>
<circle cx="502.0" cy="75.5" r="3.15"/>
<circle cx="513.0" cy="73.0" r="2.95"/>
<circle cx="652.7" cy="170.0" r="3.05"/>
<circle cx="655.0" cy="170.5" r="3.05"/>
<circle cx="657.7" cy="180.5" r="3.05"/>
<circle cx="315.2" cy="235.5" r="3.05"/>
<circle cx="392.5" cy="247.7" r="3.05"/>
<circle cx="432.0" cy="254.7" r="3.45"/>
<circle cx="435.7" cy="254.7" r="3.45"/>
<circle cx="439.5" cy="255.5" r="3.45"/>
<circle cx="441.5" cy="257.0" r="3.05"/>
<circle cx="519.7" cy="292.5" r="3.05"/>
<circle cx="503.5" cy="303.5" r="3.05"/>
<circle cx="546.5" cy="269.7" r="3.25"/>
<circle cx="551.5" cy="271.0" r="3.25"/>
<circle cx="555.0" cy="271.0" r="3.05"/>
<circle cx="559.0" cy="269.0" r="3.45"/>
<circle cx="562.7" cy="264.7" r="3.25"/>
<circle cx="564.0" cy="268.0" r="3.25"/>
<circle cx="566.5" cy="267.0" r="3.45"/>
<circle cx="570.0" cy="269.7" r="3.05"/>
<circle cx="568.0" cy="264.0" r="3.05"/>
<circle cx="664.5" cy="227.7" r="3.05"/>
<circle cx="671.5" cy="226.7" r="3.25"/>
<circle cx="675.0" cy="208.0" r="3.05"/>
<circle cx="674.0" cy="217.0" r="3.25"/>
<circle cx="678.5" cy="233.5" r="3.05"/>
<circle cx="678.0" cy="212.0" r="3.95"/>
<circle cx="679.0" cy="218.0" r="4.45"/>
<circle cx="678.0" cy="224.0" r="4.45"/>
<circle cx="679.0" cy="229.0" r="3.95"/>
<circle cx="676.0" cy="222.0" r="3.45"/>
<circle cx="131.7" cy="275.5" r="3.05"/>
<circle cx="125.7" cy="284.0" r="3.05"/>
<circle cx="16.2" cy="316.7" r="3.05"/>
<circle cx="38.7" cy="331.0" r="3.05"/>
<circle cx="43.7" cy="329.7" r="3.05"/>
<circle cx="35.0" cy="332.0" r="3.05"/>
<circle cx="31.0" cy="333.0" r="3.05"/>
<circle cx="44.5" cy="341.7" r="3.05"/>
<circle cx="10.0" cy="349.0" r="3.05"/>
<circle cx="40.0" cy="354.7" r="3.05"/>
<circle cx="33.7" cy="357.0" r="3.05"/>
<circle cx="41.0" cy="362.0" r="3.05"/>
<circle cx="39.0" cy="358.0" r="3.05"/>
<circle cx="68.2" cy="435.8" r="3.05"/>
<circle cx="17.5" cy="328.4" r="3.45"/>
<circle cx="24.0" cy="327.2" r="3.45"/>
<circle cx="21.7" cy="331.9" r="3.45"/>
<circle cx="12.2" cy="334.1" r="3.45"/>
<circle cx="11.7" cy="332.9" r="3.45"/>
<circle cx="19.5" cy="339.2" r="3.45"/>
<circle cx="13.5" cy="329.6" r="3.45"/>
<circle cx="23.5" cy="341.2" r="3.45"/>
<circle cx="22.5" cy="332.3" r="3.45"/>
<circle cx="28.2" cy="330.6" r="3.45"/>
<circle cx="17.2" cy="339.1" r="3.45"/>
<circle cx="14.6" cy="335.3" r="3.45"/>
<circle cx="23.8" cy="332.0" r="3.45"/>
<circle cx="22.0" cy="327.0" r="3.45"/>
<circle cx="24.6" cy="332.8" r="3.45"/>
<circle cx="17.3" cy="335.4" r="3.45"/>
<circle cx="20.1" cy="330.8" r="3.45"/>
<circle cx="26.9" cy="337.2" r="3.45"/>
<circle cx="15.9" cy="335.2" r="3.45"/>
<circle cx="21.5" cy="340.0" r="3.45"/>
<circle cx="25.6" cy="330.6" r="3.45"/>
<circle cx="19.4" cy="338.1" r="3.45"/>
<circle cx="14.0" cy="333.8" r="3.45"/>
<circle cx="11.8" cy="336.7" r="3.45"/>
<circle cx="26.3" cy="335.2" r="3.45"/>
<circle cx="28.5" cy="331.0" r="3.45"/>
<circle cx="24.9" cy="335.5" r="3.45"/>
<circle cx="22.6" cy="333.3" r="3.45"/>
<circle cx="20.5" cy="336.6" r="3.45"/>
<circle cx="12.2" cy="337.2" r="3.45"/>
<circle cx="27.4" cy="330.6" r="3.45"/>
<circle cx="18.7" cy="336.7" r="3.45"/>
<circle cx="11.5" cy="333.4" r="3.45"/>
<circle cx="13.6" cy="330.0" r="3.45"/>
<circle cx="18.8" cy="339.9" r="3.45"/>
<circle cx="12.6" cy="333.2" r="3.45"/>
<circle cx="22.0" cy="340.1" r="3.45"/>
<circle cx="27.4" cy="339.8" r="3.45"/>
<circle cx="16.6" cy="332.6" r="3.45"/>
<circle cx="18.2" cy="340.1" r="3.45"/>
<circle cx="10.1" cy="337.3" r="3.45"/>
<circle cx="10.8" cy="339.8" r="3.45"/>
<circle cx="15.1" cy="337.6" r="3.45"/>
<circle cx="12.4" cy="340.7" r="3.45"/>
<circle cx="19.4" cy="341.9" r="3.45"/>
<circle cx="14.2" cy="341.2" r="3.45"/>
<circle cx="16.1" cy="335.5" r="3.45"/>
<circle cx="18.8" cy="342.8" r="3.45"/>
<circle cx="18.5" cy="343.0" r="3.45"/>
<circle cx="12.7" cy="339.0" r="3.45"/>
<circle cx="-0.9" cy="374.8" r="4.45"/>
<circle cx="2.3" cy="364.9" r="4.45"/>
<circle cx="6.2" cy="362.6" r="4.45"/>
<circle cx="-1.0" cy="369.1" r="4.45"/>
<circle cx="14.4" cy="364.6" r="4.45"/>
<circle cx="3.6" cy="368.8" r="4.45"/>
<circle cx="6.9" cy="364.1" r="4.45"/>
<circle cx="10.0" cy="371.7" r="4.45"/>
<circle cx="6.3" cy="367.1" r="4.45"/>
<circle cx="20.9" cy="364.9" r="4.45"/>
<circle cx="11.8" cy="364.6" r="4.45"/>
<circle cx="12.3" cy="362.1" r="4.45"/>
<circle cx="11.8" cy="382.0" r="4.45"/>
<circle cx="21.9" cy="376.1" r="4.45"/>
<circle cx="3.8" cy="369.2" r="4.45"/>
<circle cx="1.0" cy="377.7" r="4.45"/>
<circle cx="12.0" cy="377.9" r="4.45"/>
<circle cx="5.9" cy="366.2" r="4.45"/>
<circle cx="21.6" cy="378.4" r="4.45"/>
<circle cx="20.5" cy="377.0" r="4.45"/>
<circle cx="2.8" cy="372.4" r="4.45"/>
<circle cx="6.7" cy="362.1" r="4.45"/>
<circle cx="3.8" cy="376.0" r="4.45"/>
<circle cx="24.7" cy="370.9" r="4.45"/>
<circle cx="24.7" cy="369.2" r="4.45"/>
<circle cx="2.6" cy="366.3" r="4.45"/>
<circle cx="1.9" cy="365.8" r="4.45"/>
<circle cx="14.7" cy="380.4" r="4.45"/>
<circle cx="21.2" cy="371.6" r="4.45"/>
<circle cx="15.6" cy="378.3" r="4.45"/>
<circle cx="-1.5" cy="375.4" r="4.45"/>
<circle cx="23.3" cy="377.9" r="4.45"/>
<circle cx="18.5" cy="371.5" r="4.45"/>
<circle cx="1.4" cy="378.1" r="4.45"/>
<circle cx="6.0" cy="378.3" r="4.45"/>
<circle cx="25.1" cy="369.8" r="4.45"/>
<circle cx="8.0" cy="381.4" r="4.45"/>
<circle cx="17.7" cy="365.1" r="4.45"/>
<circle cx="0.4" cy="378.9" r="4.45"/>
<circle cx="6.5" cy="373.0" r="4.45"/>
<circle cx="25.1" cy="375.1" r="4.45"/>
<circle cx="11.8" cy="381.1" r="4.45"/>
<circle cx="9.0" cy="379.8" r="4.45"/>
<circle cx="20.8" cy="365.9" r="4.45"/>
<circle cx="3.6" cy="367.7" r="4.45"/>
<circle cx="3.2" cy="373.8" r="4.45"/>
<circle cx="3.8" cy="370.3" r="4.45"/>
<circle cx="6.6" cy="371.1" r="4.45"/>
<circle cx="13.5" cy="380.5" r="4.45"/>
<circle cx="8.6" cy="380.8" r="4.45"/>
<circle cx="11.0" cy="372.7" r="4.45"/>
<circle cx="11.7" cy="361.9" r="4.45"/>
<circle cx="9.2" cy="365.3" r="4.45"/>
<circle cx="1.2" cy="371.4" r="4.45"/>
<circle cx="17.8" cy="373.2" r="4.45"/>
<circle cx="5.8" cy="372.4" r="4.45"/>
<circle cx="12.7" cy="378.0" r="4.45"/>
<circle cx="-0.8" cy="373.3" r="4.45"/>
<circle cx="3.5" cy="367.3" r="4.45"/>
<circle cx="19.2" cy="372.2" r="4.45"/>
<circle cx="12.9" cy="377.5" r="4.45"/>
<circle cx="23.4" cy="370.8" r="4.45"/>
<circle cx="14.4" cy="372.1" r="4.45"/>
<circle cx="11.4" cy="376.0" r="4.45"/>
<circle cx="9.6" cy="372.7" r="4.45"/>
<circle cx="10.3" cy="381.3" r="4.45"/>
<circle cx="17.0" cy="379.9" r="4.45"/>
<circle cx="12.8" cy="381.3" r="4.45"/>
<circle cx="21.2" cy="364.4" r="4.45"/>
<circle cx="-0.4" cy="370.8" r="4.45"/>
<circle cx="-1.8" cy="366.6" r="4.45"/>
<circle cx="-1.8" cy="375.6" r="4.45"/>
<circle cx="19.5" cy="380.3" r="4.45"/>
<circle cx="0.6" cy="376.5" r="4.45"/>
<circle cx="15.8" cy="364.5" r="4.45"/>
<circle cx="7.9" cy="371.7" r="4.45"/>
<circle cx="0.8" cy="370.6" r="4.45"/>
<circle cx="11.5" cy="368.6" r="4.45"/>
<circle cx="1.9" cy="368.2" r="4.45"/>
<circle cx="12.6" cy="370.7" r="4.45"/>
<circle cx="14.7" cy="372.3" r="4.45"/>
<circle cx="-0.9" cy="367.1" r="4.45"/>
<circle cx="4.1" cy="364.2" r="4.45"/>
<circle cx="8.7" cy="380.6" r="4.45"/>
<circle cx="20.6" cy="366.9" r="4.45"/>
<circle cx="13.1" cy="376.2" r="4.45"/>
<circle cx="16.6" cy="370.4" r="4.45"/>
<circle cx="15.0" cy="378.3" r="4.45"/>
<circle cx="9.6" cy="368.6" r="4.45"/>
<circle cx="12.6" cy="381.0" r="4.45"/>
<circle cx="7.6" cy="381.6" r="4.45"/>
<circle cx="17.0" cy="384.7" r="4.45"/>
<circle cx="9.2" cy="386.5" r="4.45"/>
<circle cx="25.3" cy="386.1" r="4.45"/>
<circle cx="16.0" cy="383.0" r="4.45"/>
<circle cx="24.4" cy="393.4" r="4.45"/>
<circle cx="4.8" cy="391.3" r="4.45"/>
<circle cx="27.5" cy="390.1" r="4.45"/>
<circle cx="15.8" cy="401.4" r="4.45"/>
<circle cx="12.2" cy="392.2" r="4.45"/>
<circle cx="10.3" cy="401.3" r="4.45"/>
<circle cx="23.4" cy="395.8" r="4.45"/>
<circle cx="12.6" cy="387.7" r="4.45"/>
<circle cx="0.5" cy="398.7" r="4.45"/>
<circle cx="7.2" cy="382.6" r="4.45"/>
<circle cx="29.3" cy="396.8" r="4.45"/>
<circle cx="8.1" cy="384.8" r="4.45"/>
<circle cx="8.6" cy="390.9" r="4.45"/>
<circle cx="3.7" cy="390.5" r="4.45"/>
<circle cx="33.0" cy="393.3" r="4.45"/>
<circle cx="9.1" cy="388.0" r="4.45"/>
<circle cx="15.1" cy="392.1" r="4.45"/>
<circle cx="5.2" cy="392.1" r="4.45"/>
<circle cx="1.2" cy="389.2" r="4.45"/>
<circle cx="9.0" cy="384.5" r="4.45"/>
<circle cx="19.1" cy="392.8" r="4.45"/>
<circle cx="25.0" cy="396.4" r="4.45"/>
<circle cx="23.8" cy="402.6" r="4.45"/>
<circle cx="12.0" cy="387.1" r="4.45"/>
<circle cx="24.1" cy="396.0" r="4.45"/>
<circle cx="30.1" cy="395.6" r="4.45"/>
<circle cx="24.4" cy="400.7" r="4.45"/>
<circle cx="3.0" cy="392.7" r="4.45"/>
<circle cx="16.2" cy="401.4" r="4.45"/>
<circle cx="27.0" cy="401.1" r="4.45"/>
<circle cx="19.0" cy="403.0" r="4.45"/>
<circle cx="22.6" cy="397.4" r="4.45"/>
<circle cx="2.8" cy="388.1" r="4.45"/>
<circle cx="18.1" cy="395.6" r="4.45"/>
<circle cx="20.5" cy="397.1" r="4.45"/>
<circle cx="15.6" cy="378.1" r="4.45"/>
<circle cx="26.7" cy="399.0" r="4.45"/>
<circle cx="16.1" cy="393.0" r="4.45"/>
<circle cx="21.7" cy="379.8" r="4.45"/>
<circle cx="24.5" cy="385.1" r="4.45"/>
<circle cx="0.7" cy="385.4" r="4.45"/>
<circle cx="24.3" cy="383.7" r="4.45"/>
<circle cx="15.8" cy="388.7" r="4.45"/>
<circle cx="15.2" cy="397.1" r="4.45"/>
<circle cx="25.6" cy="395.3" r="4.45"/>
<circle cx="21.1" cy="380.2" r="4.45"/>
<circle cx="3.3" cy="385.1" r="4.45"/>
<circle cx="24.8" cy="386.5" r="4.45"/>
<circle cx="18.4" cy="378.3" r="4.45"/>
<circle cx="0.2" cy="385.5" r="4.45"/>
<circle cx="22.2" cy="397.4" r="4.45"/>
<circle cx="22.3" cy="386.1" r="4.45"/>
<circle cx="16.6" cy="391.0" r="4.45"/>
<circle cx="14.8" cy="381.3" r="4.45"/>
<circle cx="30.2" cy="383.6" r="4.45"/>
<circle cx="-1.4" cy="390.9" r="4.45"/>
<circle cx="14.2" cy="385.5" r="4.45"/>
<circle cx="5.6" cy="394.3" r="4.45"/>
<circle cx="3.1" cy="392.7" r="4.45"/>
<circle cx="27.5" cy="392.2" r="4.45"/>
<circle cx="29.9" cy="397.7" r="4.45"/>
<circle cx="6.3" cy="403.1" r="4.45"/>
<circle cx="15.5" cy="378.7" r="4.45"/>
<circle cx="-1.9" cy="391.8" r="4.45"/>
<circle cx="14.2" cy="386.5" r="4.45"/>
<circle cx="3.1" cy="387.6" r="4.45"/>
<circle cx="9.4" cy="401.5" r="4.45"/>
<circle cx="31.4" cy="398.0" r="4.45"/>
<circle cx="30.5" cy="386.1" r="4.45"/>
<circle cx="11.4" cy="389.0" r="4.45"/>
<circle cx="11.0" cy="390.0" r="4.45"/>
<circle cx="8.3" cy="404.2" r="4.45"/>
<circle cx="7.0" cy="385.4" r="4.45"/>
<circle cx="16.4" cy="383.3" r="4.45"/>
<circle cx="11.4" cy="404.8" r="4.45"/>
<circle cx="29.8" cy="400.7" r="4.45"/>
<circle cx="20.7" cy="403.6" r="4.45"/>
<circle cx="31.9" cy="393.4" r="4.45"/>
<circle cx="24.4" cy="390.6" r="4.45"/>
<circle cx="25.1" cy="396.0" r="4.45"/>
<circle cx="8.3" cy="379.4" r="4.45"/>
<circle cx="15.0" cy="387.6" r="4.45"/>
<circle cx="8.7" cy="398.7" r="4.45"/>
<circle cx="21.6" cy="386.4" r="4.45"/>
<circle cx="18.1" cy="389.0" r="4.45"/>
<circle cx="4.0" cy="382.5" r="4.45"/>
<circle cx="15.9" cy="384.2" r="4.45"/>
<circle cx="14.2" cy="381.9" r="4.45"/>
<circle cx="10.3" cy="380.6" r="4.45"/>
<circle cx="6.6" cy="385.2" r="4.45"/>
<circle cx="18.5" cy="402.8" r="4.45"/>
<circle cx="25.0" cy="389.6" r="4.45"/>
<circle cx="12.9" cy="392.7" r="4.45"/>
<circle cx="11.6" cy="387.5" r="4.45"/>
<circle cx="0.2" cy="385.8" r="4.45"/>
<circle cx="16.1" cy="395.6" r="4.45"/>
<circle cx="29.1" cy="384.0" r="4.45"/>
<circle cx="7.8" cy="385.0" r="4.45"/>
<circle cx="12.4" cy="390.5" r="4.45"/>
<circle cx="30.2" cy="391.3" r="4.45"/>
<circle cx="12.1" cy="404.0" r="4.45"/>
<circle cx="27.7" cy="402.0" r="4.45"/>
<circle cx="16.8" cy="397.1" r="4.45"/>
<circle cx="31.9" cy="398.2" r="4.45"/>
<circle cx="21.3" cy="399.4" r="4.45"/>
<circle cx="14.5" cy="393.4" r="4.45"/>
<circle cx="6.4" cy="403.8" r="4.45"/>
<circle cx="21.2" cy="386.5" r="4.45"/>
<circle cx="2.6" cy="385.1" r="4.45"/>
<circle cx="20.9" cy="397.6" r="4.45"/>
<circle cx="16.9" cy="394.3" r="4.45"/>
<circle cx="12.0" cy="384.3" r="4.45"/>
<circle cx="19.6" cy="378.3" r="4.45"/>
<circle cx="8.9" cy="390.9" r="4.45"/>
<circle cx="32.5" cy="396.0" r="4.45"/>
<circle cx="34.3" cy="407.7" r="3.95"/>
<circle cx="13.5" cy="405.0" r="3.95"/>
<circle cx="21.9" cy="410.1" r="3.95"/>
<circle cx="19.4" cy="405.1" r="3.95"/>
<circle cx="27.4" cy="413.1" r="3.95"/>
<circle cx="16.8" cy="407.0" r="3.95"/>
<circle cx="27.8" cy="404.4" r="3.95"/>
<circle cx="31.5" cy="410.9" r="3.95"/>
<circle cx="22.2" cy="404.5" r="3.95"/>
<circle cx="32.2" cy="404.8" r="3.95"/>
<circle cx="13.1" cy="411.1" r="3.95"/>
<circle cx="15.4" cy="413.4" r="3.95"/>
<circle cx="21.9" cy="404.2" r="3.95"/>
<circle cx="13.1" cy="407.0" r="3.95"/>
<circle cx="27.3" cy="413.4" r="3.95"/>
<circle cx="10.7" cy="406.7" r="3.95"/>
<circle cx="7.9" cy="406.7" r="3.95"/>
<circle cx="35.8" cy="406.0" r="3.95"/>
<circle cx="27.3" cy="406.5" r="3.95"/>
<circle cx="18.0" cy="406.0" r="3.95"/>
<circle cx="15.0" cy="406.2" r="3.95"/>
<circle cx="17.4" cy="411.9" r="3.95"/>
<circle cx="32.3" cy="407.2" r="3.95"/>
<circle cx="7.6" cy="407.7" r="3.95"/>
<circle cx="17.9" cy="413.0" r="3.95"/>
<circle cx="12.2" cy="406.4" r="3.95"/>
<circle cx="19.1" cy="411.7" r="3.95"/>
<circle cx="35.4" cy="405.1" r="3.95"/>
<circle cx="29.9" cy="412.8" r="3.95"/>
<circle cx="16.9" cy="405.3" r="3.95"/>
<circle cx="36.6" cy="409.4" r="3.95"/>
<circle cx="14.4" cy="410.6" r="3.95"/>
<circle cx="16.1" cy="405.3" r="3.95"/>
<circle cx="35.3" cy="409.6" r="3.95"/>
<circle cx="13.5" cy="407.7" r="3.95"/>
<circle cx="18.4" cy="405.0" r="3.95"/>
<circle cx="19.8" cy="407.9" r="3.95"/>
<circle cx="31.7" cy="410.9" r="3.95"/>
<circle cx="32.3" cy="411.3" r="3.95"/>
<circle cx="25.4" cy="405.9" r="3.95"/>
<circle cx="8.9" cy="423.3" r="3.65"/>
<circle cx="5.5" cy="428.0" r="3.65"/>
<circle cx="0.9" cy="425.6" r="3.65"/>
<circle cx="7.4" cy="420.0" r="3.65"/>
<circle cx="2.7" cy="425.0" r="3.65"/>
<circle cx="19.9" cy="424.4" r="3.65"/>
<circle cx="6.6" cy="424.0" r="3.65"/>
<circle cx="17.4" cy="427.1" r="3.65"/>
<circle cx="20.9" cy="429.2" r="3.65"/>
<circle cx="18.6" cy="420.5" r="3.65"/>
<circle cx="23.5" cy="422.5" r="3.65"/>
<circle cx="15.9" cy="423.5" r="3.65"/>
<circle cx="20.7" cy="421.4" r="3.65"/>
<circle cx="6.9" cy="421.9" r="3.65"/>
<circle cx="16.2" cy="422.9" r="3.65"/>
<circle cx="14.2" cy="421.8" r="3.65"/>
<circle cx="22.6" cy="426.8" r="3.65"/>
<circle cx="13.3" cy="428.8" r="3.65"/>
<circle cx="3.3" cy="421.3" r="3.65"/>
<circle cx="27.2" cy="426.0" r="3.65"/>
<circle cx="26.0" cy="423.5" r="3.65"/>
<circle cx="24.3" cy="424.4" r="3.65"/>
<circle cx="7.3" cy="428.3" r="3.65"/>
<circle cx="16.7" cy="426.4" r="3.65"/>
<circle cx="6.1" cy="423.4" r="3.65"/>
<circle cx="4.0" cy="421.4" r="3.65"/>
<circle cx="7.1" cy="426.2" r="3.65"/>
<circle cx="18.2" cy="421.4" r="3.65"/>
<circle cx="19.0" cy="421.2" r="3.65"/>
<circle cx="8.7" cy="421.4" r="3.65"/>
<circle cx="22.3" cy="425.6" r="3.65"/>
<circle cx="11.1" cy="425.6" r="3.65"/>
<circle cx="17.9" cy="420.1" r="3.65"/>
<circle cx="4.6" cy="427.3" r="3.65"/>
<circle cx="11.5" cy="422.4" r="3.65"/>
<circle cx="8.6" cy="430.4" r="3.65"/>
<circle cx="8.7" cy="425.8" r="3.65"/>
<circle cx="10.0" cy="424.0" r="3.65"/>
<circle cx="10.2" cy="421.4" r="3.65"/>
<circle cx="20.4" cy="421.4" r="3.65"/>
<circle cx="3.1" cy="436.8" r="3.45"/>
<circle cx="2.9" cy="437.6" r="3.45"/>
<circle cx="3.5" cy="429.0" r="3.45"/>
<circle cx="-1.8" cy="433.6" r="3.45"/>
<circle cx="5.7" cy="437.9" r="3.45"/>
<circle cx="-0.9" cy="434.5" r="3.45"/>
<circle cx="2.5" cy="433.1" r="3.45"/>
<circle cx="-0.2" cy="430.4" r="3.45"/>
<circle cx="4.3" cy="438.1" r="3.45"/>
<circle cx="-0.7" cy="432.9" r="3.45"/>
<circle cx="0.4" cy="428.5" r="3.45"/>
<circle cx="3.8" cy="427.6" r="3.45"/>
<circle cx="52.2" cy="421.1" r="3.45"/>
<circle cx="51.7" cy="423.0" r="3.45"/>
<circle cx="49.8" cy="419.3" r="3.45"/>
<circle cx="48.9" cy="419.8" r="3.45"/>
<circle cx="39.7" cy="424.8" r="3.45"/>
<circle cx="49.9" cy="419.5" r="3.45"/>
<circle cx="35.2" cy="421.2" r="3.45"/>
<circle cx="42.4" cy="421.1" r="3.45"/>
<circle cx="33.0" cy="420.0" r="3.45"/>
<circle cx="47.4" cy="425.2" r="3.45"/>
<circle cx="31.0" cy="422.5" r="3.45"/>
<circle cx="44.4" cy="422.4" r="3.45"/>
<circle cx="45.0" cy="420.4" r="3.45"/>
<circle cx="40.1" cy="422.7" r="3.45"/>
<circle cx="40.2" cy="423.3" r="3.45"/>
<circle cx="40.7" cy="421.5" r="3.45"/>
<circle cx="30.6" cy="423.0" r="3.45"/>
<circle cx="41.7" cy="419.9" r="3.45"/>
<circle cx="48.3" cy="424.2" r="3.45"/>
<circle cx="41.0" cy="419.4" r="3.45"/>
<circle cx="41.4" cy="418.9" r="3.45"/>
<circle cx="33.1" cy="421.4" r="3.45"/>
<circle cx="32.2" cy="421.5" r="3.45"/>
<circle cx="42.2" cy="418.3" r="3.45"/>
<circle cx="45.3" cy="418.7" r="3.45"/>
<circle cx="59.7" cy="432.2" r="3.25"/>
<circle cx="56.2" cy="426.4" r="3.25"/>
<circle cx="56.1" cy="429.0" r="3.25"/>
<circle cx="59.7" cy="432.5" r="3.25"/>
<circle cx="55.9" cy="433.7" r="3.25"/>
<circle cx="49.0" cy="428.8" r="3.25"/>
<circle cx="60.1" cy="427.3" r="3.25"/>
<circle cx="62.3" cy="428.2" r="3.25"/>
<circle cx="61.1" cy="427.1" r="3.25"/>
<circle cx="56.0" cy="433.4" r="3.25"/>
<circle cx="51.3" cy="428.1" r="3.25"/>
<circle cx="56.1" cy="428.6" r="3.25"/>
<circle cx="58.9" cy="433.2" r="3.25"/>
<circle cx="50.7" cy="432.3" r="3.25"/>
</g>
<circle cx="649" cy="178.7" r="6.7" fill="#ffff00"/>
<circle cx="29.4" cy="416.5" r="6" fill="#ffff00"/>
<rect x="50.7" y="308.6" width="16.5" height="13" fill="#8cc63f"/><text x="59" y="318.8" font-size="9" font-weight="bold" fill="#ffff33" text-anchor="middle">N2</text>
<rect x="20" y="387.4" width="17.5" height="13.5" fill="#8cc63f"/><text x="28.8" y="398" font-size="9" font-weight="bold" fill="#ffff33" text-anchor="middle">M4</text>
<text x="83.5" y="183.3" font-size="9.5" textLength="74" lengthAdjust="spacingAndGlyphs" fill="#000" font-weight="normal">Nomathamsanqa</text>
<text x="216.5" y="141.3" font-size="9.5" textLength="37" lengthAdjust="spacingAndGlyphs" fill="#000" font-weight="normal">Paterson</text>
<text x="273.0" y="78.3" font-size="9.5" textLength="38.5" lengthAdjust="spacingAndGlyphs" fill="#000" font-weight="normal">Alicedale</text>
<text x="438.5" y="249.8" font-size="9.5" textLength="46" lengthAdjust="spacingAndGlyphs" fill="#000" font-weight="normal">Alexandria</text>
<text x="563.5" y="266.3" font-size="9.5" textLength="91" lengthAdjust="spacingAndGlyphs" fill="#000" font-weight="normal">Boesmansriviermond</text>
<text x="535.0" y="281.3" font-size="9.5" textLength="66" lengthAdjust="spacingAndGlyphs" fill="#000" font-weight="normal">Kenton-on-Sea</text>
<text x="43.7" y="337.3" font-size="9.5" textLength="52.5" lengthAdjust="spacingAndGlyphs" fill="#000" font-weight="normal">Wells Estate</text>
<text x="6.0" y="357.3" font-size="9.5" textLength="25" lengthAdjust="spacingAndGlyphs" fill="#000" font-weight="normal">Zwide</text>
<text x="-1.0" y="377.3" font-size="9.5" textLength="29" lengthAdjust="spacingAndGlyphs" fill="#000" font-weight="normal">(Bhayi)</text>
<text x="22.4" y="422.3" font-size="9.5" textLength="35.5" lengthAdjust="spacingAndGlyphs" fill="#000" font-weight="normal">Gqebera</text>
<text x="501" y="71.4" font-size="13.8" font-weight="bold" textLength="95.5" lengthAdjust="spacingAndGlyphs" fill="#000">Grahamstown</text>
<text x="543.5" y="578.5" font-size="12" textLength="118" lengthAdjust="spacingAndGlyphs" fill="#8c8c8c">(c) OpenStreetMaps</text>
<g><line x1="36.3" y1="539.7" x2="36.3" y2="560" stroke="#008000" stroke-width="1.3"/><line x1="36.3" y1="559.5" x2="56.4" y2="559.5" stroke="#ff0000" stroke-width="1.3"/><circle cx="35.8" cy="560" r="1.4" fill="#000"/><text x="30" y="530" font-size="13" fill="#008000">y</text><text x="63.8" y="564.5" font-size="13" fill="#ff0000">x</text><text x="35.6" y="572" font-size="13" fill="#0000ff">z</text></g>
</svg>
<div class="abs" id="vs"></div><div class="abs" id="vthumb"></div>
<svg class="abs" style="left:690px;top:120px" width="19" height="614" viewBox="0 0 19 614"><path d="M5 13.5 L9.5 8.5 L14 13.5" stroke="#4a4a4a" stroke-width="2.2" fill="none"/><path d="M5 602 L9.5 607 L14 602" stroke="#4a4a4a" stroke-width="2.2" fill="none"/></svg>
<div class="abs" id="hs"></div><div class="abs" id="hthumb"></div>
<svg class="abs" style="left:8px;top:716px" width="682" height="18" viewBox="0 0 682 18"><path d="M12.5 4.5 L7.5 9 L12.5 13.5" stroke="#4a4a4a" stroke-width="2.2" fill="none"/><path d="M667.5 4.5 L672.5 9 L667.5 13.5" stroke="#4a4a4a" stroke-width="2.2" fill="none"/></svg>
<!-- layers panel -->
<div class="abs" id="lp"></div>
<div class="abs" id="lptitle">Layers</div>
<svg class="abs" style="left:920px;top:100px" width="40" height="14" viewBox="0 0 40 14"><path d="M4.7 4.5h3.8v4.6h-3.8z" fill="none" stroke="#7a7a8a" stroke-width="1"/><rect x="6.6" y="4.2" width="2.4" height="5" fill="#7a7a8a"/><path d="M3.2 9.4h6.8 M6.6 9.4v2.3" stroke="#7a7a8a" stroke-width="1" fill="none"/><path d="M27.8 4.8 L35.2 10.4 M35.2 4.8 L27.8 10.4" stroke="#747484" stroke-width="2.2" fill="none"/></svg>
<div class="abs" id="lpin"></div>
<div class="abs" id="lphead"><span>Description</span></div>
<div class="abs" id="row1l"></div><div class="abs" id="row1"></div>
<div class="abs" style="left:781px;top:143px;width:1px;height:48px;background:#d8d8e0"></div>
<div class="abs cb" style="left:733px;top:148px"></div>
<div class="abs cb" style="left:733px;top:173px"></div>
<svg class="abs" style="left:733px;top:144px" width="16" height="44" viewBox="0 0 16 44"><path d="M3 10.5 L6 14.5 L12.5 2.5" stroke="#1a1a40" stroke-width="1.3" fill="none"/><path d="M3 35.5 L6 39.5 L12.5 27.5" stroke="#1a1a40" stroke-width="1.3" fill="none"/></svg>
<svg class="abs" style="left:750px;top:148px" width="32" height="40" viewBox="0 0 32 40">
<circle cx="6.5" cy="7" r="3" fill="#0000f0" stroke="#00003c" stroke-width=".8"/>
<rect x="16.5" y="1" width="13" height="12" fill="#fff"/>
<g id="eye"><path d="M17.5 8 Q23 3 28.5 8 Q23 12.5 17.5 8 Z" fill="#fff" stroke="#000" stroke-width="1"/><circle cx="23" cy="8" r="2.3" fill="#000"/><path d="M19 4.8 L17.8 2.8 M21.2 3.6 L20.6 1.4 M23 3.3 L23 1 M24.8 3.6 L25.4 1.4 M27 4.8 L28.2 2.8" stroke="#000" stroke-width=".9"/></g>
<use href="#eye" y="24"/>
<path d="M0.5 33.5 V25 h4 l1 1.5 h5.5 v2" fill="#f5d060" stroke="#b8860b" stroke-width=".9"/><path d="M0.5 33.5 L3 28.5 H13 L10.5 33.5 Z" fill="#ffe48a" stroke="#b8860b" stroke-width=".9"/>
</svg>
<svg class="abs" style="left:720px;top:174px" width="8" height="10" viewBox="0 0 8 10"><path d="M2 2 L6 5 L2 8 Z" fill="#8a8a8a"/></svg>
<div class="abs rowt" style="left:786.5px;top:148px;color:#fff">Stores</div>
<div class="abs rowt" style="left:786.5px;top:172.5px;color:#1e1e32">South Africa Maps</div>
<!-- status -->
<div class="abs" id="status"></div>
<div class="abs tbx" style="left:73.5px;width:114.5px"></div>
<div class="abs tbx" style="left:203px;width:88px"></div>
<div class="abs tbx" style="left:575.5px;width:133.5px"></div>
<div class="abs st" style="left:77.8px;letter-spacing:-.33px">GCS_WGS_...</div>
<svg class="abs" style="left:172px;top:749px" width="10" height="2"><path d="M0 0h2v2h-2zM3.8 0h2v2h-2zM7.6 0h2v2h-2z" fill="#111"/></svg>
<div class="abs st" style="left:207.6px;letter-spacing:.25px">1 031 1...</div>
<div class="abs st" style="left:327.3px;letter-spacing:.13px">25,967,-34,289,0,000</div>
<div class="abs st" style="left:581.3px;letter-spacing:.1px">-90,00, 0,00, 0,00</div>
<svg class="abs" style="left:694.4px;top:749px" width="10" height="2"><path d="M0 0h2v2h-2zM3.8 0h2v2h-2zM7.6 0h2v2h-2z" fill="#111"/></svg>
<svg class="abs" style="left:17px;top:742px" width="18" height="18" viewBox="0 0 18 18"><circle cx="8.8" cy="8.9" r="7.6" fill="#3b322f"/><text x="8.8" y="13.2" font-size="12" font-weight="bold" fill="#fff" text-anchor="middle">?</text></svg>
<svg class="abs" style="left:51px;top:741px" width="18" height="18" viewBox="0 0 18 18"><defs><clipPath id="gc"><circle cx="8.9" cy="8.7" r="7.8"/></clipPath></defs><circle cx="8.9" cy="8.7" r="7.8" fill="#4c423e"/><g clip-path="url(#gc)" fill="none" stroke="#c8c6ca" stroke-width=".55"><ellipse cx="8.9" cy="8.7" rx="8" ry="2.6" transform="rotate(20 8.9 8.7)"/><ellipse cx="8.9" cy="8.7" rx="8" ry="5.6" transform="rotate(20 8.9 8.7)"/><ellipse cx="8.9" cy="8.7" rx="2.6" ry="8" transform="rotate(20 8.9 8.7)"/><ellipse cx="8.9" cy="8.7" rx="5.6" ry="8" transform="rotate(20 8.9 8.7)"/></g></svg>
<svg class="abs" style="left:277px;top:747.6px" width="9" height="6" viewBox="0 0 9 6"><path d="M0.6 0.6 H8 L4.3 4.8 Z" fill="#2a2a2a"/></svg>
<svg class="abs" style="left:308px;top:742px" width="13" height="16" viewBox="0 0 13 16"><path d="M1 5.4 Q1 0.6 5.6 0.6 V5.4 Z M6.8 0.6 Q11.6 0.6 11.6 5.4 H6.8 Z M1 6.6 H11.6 V10 Q11.6 15.2 6.3 15.2 Q1 15.2 1 10 Z" fill="#6a584c"/></svg>
<svg class="abs" style="left:463px;top:741px" width="20" height="18" viewBox="0 0 20 18"><path d="M2.5 15 L4 9.6 L9 13.6 L15.3 10.5 L12 2.7" fill="none" stroke="#1a0a0a" stroke-width="1.1" stroke-linejoin="round"/><g fill="#d01010"><rect x="1.4" y="13.9" width="2.3" height="2.3"/><rect x="2.9" y="8.5" width="2.3" height="2.3"/><rect x="7.9" y="12.5" width="2.3" height="2.3"/><rect x="14.2" y="9.4" width="2.3" height="2.3"/><rect x="10.9" y="1.6" width="2.3" height="2.3"/></g></svg>
<svg class="abs" style="left:494px;top:741px" width="17" height="17" viewBox="0 0 17 17"><path d="M2.2 8.2 V5.6 Q2.2 2.3 5.4 2.3 Q8.6 2.3 8.6 5.6 V8.4" fill="none" stroke="#3b322f" stroke-width="1.9"/><rect x="4.4" y="8" width="10.6" height="7.6" rx="1.3" fill="#3b322f"/><rect x="9" y="10.4" width="1.5" height="2.8" fill="#e8e8ee"/></svg>
<svg class="abs" style="left:523px;top:741px" width="18" height="18" viewBox="0 0 18 18"><path d="M2.6 2.2 H15.8 V13.4 H10.6 L9.2 15.2 L7.8 13.4 H2.6 Z" fill="none" stroke="#5c524e" stroke-width="1.1" stroke-linejoin="round"/><path d="M4.8 5.6 H13.6 M6.4 8.6 H12" stroke="#857c78" stroke-width="1.1"/></svg>
<svg class="abs" style="left:554.2px;top:744.4px" width="16" height="12.4" viewBox="0 0 18 14"><path d="M1 7 Q9 -2.6 17 7 Q9 16.6 1 7 Z" fill="#0a0a0a"/><circle cx="9" cy="7" r="3.9" fill="#f0f0f4"/><circle cx="9" cy="7" r="2.9" fill="#0a0a0a"/><circle cx="7.6" cy="5.6" r="1" fill="#f0f0f4"/></svg>
</body></html>
